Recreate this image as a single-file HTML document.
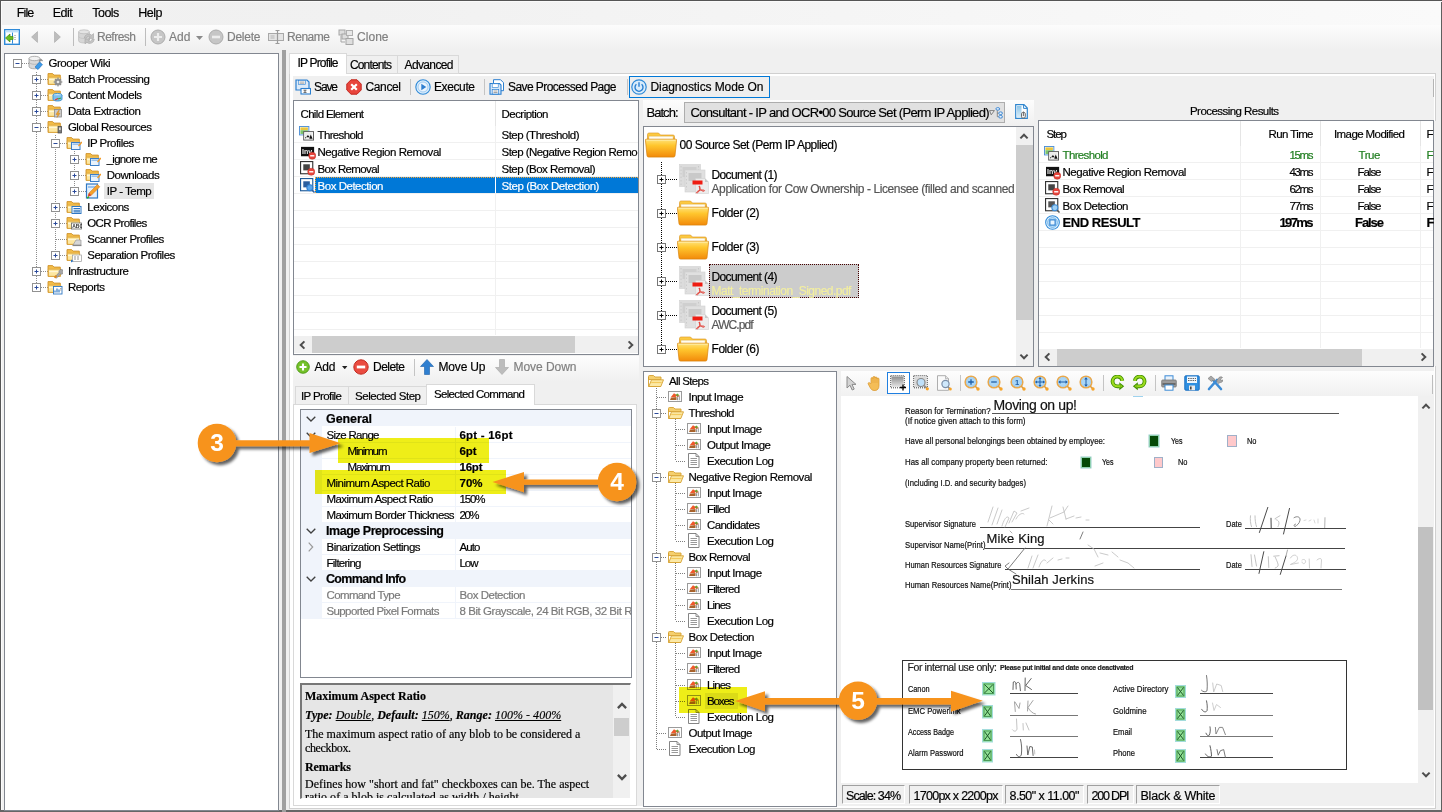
<!DOCTYPE html>
<html><head><meta charset="utf-8"><title>Grooper</title>
<style>
html,body{margin:0;padding:0;}
body{width:1442px;height:812px;overflow:hidden;background:#f0f0f0;position:relative;font-family:"Liberation Sans",sans-serif;font-size:11px;color:#000;}
.a{position:absolute;box-sizing:border-box;}
.t{position:absolute;white-space:nowrap;-webkit-text-stroke:.18px currentColor;}
svg{overflow:visible;}
</style></head><body>
<svg width="0" height="0" style="position:absolute"><defs><symbol id="fold" viewBox="0 0 16 16"><path d="M1 2.600h4.600l1.400 1.500h6.300v9.300H1z" fill="#f2bd49" stroke="#cf922b" stroke-width=".9"/><path d="M1.300 6.200h12.400l-.5 7.100H1.600z" fill="#fde7a0" stroke="#d9a238" stroke-width=".8"/><path d="M2 8.600h11" stroke="#fff7d9" stroke-width="1.100"/></symbol><symbol id="f_batch" viewBox="0 0 16 16"><path d="M1 2.600h4.600l1.400 1.500h6.300v9.300H1z" fill="#f2bd49" stroke="#cf922b" stroke-width=".9"/><path d="M1.300 6.200h12.400l-.5 7.100H1.600z" fill="#fde7a0" stroke="#d9a238" stroke-width=".8"/><path d="M2 8.600h11" stroke="#fff7d9" stroke-width="1.100"/><circle cx="11" cy="11" r="3.6" fill="#9a9a9a"/><circle cx="11" cy="11" r="1.4" fill="#e8e8e8"/><path d="M11 6.6v8.8M6.6 11h8.8M7.9 7.9l6.2 6.2M14.1 7.9l-6.2 6.2" stroke="#8a8a8a" stroke-width="1.1"/><circle cx="11" cy="11" r="1.3" fill="#e8e8e8"/></symbol><symbol id="f_content" viewBox="0 0 16 16"><path d="M1 2.600h4.600l1.400 1.500h6.300v9.300H1z" fill="#f2bd49" stroke="#cf922b" stroke-width=".9"/><path d="M1.300 6.200h12.400l-.5 7.100H1.600z" fill="#fde7a0" stroke="#d9a238" stroke-width=".8"/><path d="M2 8.600h11" stroke="#fff7d9" stroke-width="1.100"/><ellipse cx="10.5" cy="8.2" rx="4.5" ry="1.8" fill="#bfe3f7" stroke="#3a8fd0" stroke-width=".9"/><path d="M6 8.2v4c0 1 2 1.8 4.5 1.8s4.5-.8 4.5-1.8v-4" fill="#7cc0ee" stroke="#3a8fd0" stroke-width=".9"/><path d="M8 13l3-1.5" stroke="#d33" stroke-width="1.2"/><path d="M11 12l3-1" stroke="#3a3" stroke-width="1.2"/></symbol><symbol id="f_data" viewBox="0 0 16 16"><path d="M1 2.600h4.600l1.400 1.500h6.300v9.300H1z" fill="#f2bd49" stroke="#cf922b" stroke-width=".9"/><path d="M1.300 6.200h12.400l-.5 7.100H1.600z" fill="#fde7a0" stroke="#d9a238" stroke-width=".8"/><path d="M2 8.600h11" stroke="#fff7d9" stroke-width="1.100"/><rect x="7.5" y="6.5" width="7" height="7.5" fill="#c9c9c9" stroke="#8a8a8a" stroke-width=".8"/><path d="M11.5 7.5l-2.5 4h2l-1 3 3-4.2h-2l1.3-2.8z" fill="#f5a623" stroke="#c77c10" stroke-width=".4"/></symbol><symbol id="f_global" viewBox="0 0 16 16"><path d="M1 2.600h4.600l1.400 1.500h6.300v9.300H1z" fill="#f2bd49" stroke="#cf922b" stroke-width=".9"/><path d="M1.300 6.200h12.400l-.5 7.100H1.600z" fill="#fde7a0" stroke="#d9a238" stroke-width=".8"/><path d="M2 8.600h11" stroke="#fff7d9" stroke-width="1.100"/><rect x="11" y="7.5" width="3.6" height="6.5" fill="#7d7d7d" stroke="#444" stroke-width=".7"/><rect x="12" y="8.5" width="1.6" height="2.5" fill="#ddd"/></symbol><symbol id="f_ip" viewBox="0 0 16 16"><path d="M1 2.600h4.600l1.400 1.500h6.300v9.300H1z" fill="#f2bd49" stroke="#cf922b" stroke-width=".9"/><path d="M1.300 6.200h12.400l-.5 7.100H1.600z" fill="#fde7a0" stroke="#d9a238" stroke-width=".8"/><path d="M2 8.600h11" stroke="#fff7d9" stroke-width="1.100"/><rect x="5.5" y="7.5" width="8.5" height="7" fill="#e9f3fc" stroke="#3c7fc8" stroke-width="1"/><rect x="6.5" y="8.5" width="6.5" height="1.4" fill="#8fbbe8"/><path d="M15.5 6.5l-3.5 4 1 1 3.5-4z" fill="#f59a23"/></symbol><symbol id="f_lex" viewBox="0 0 16 16"><path d="M1 2.600h4.600l1.400 1.500h6.300v9.300H1z" fill="#f2bd49" stroke="#cf922b" stroke-width=".9"/><path d="M1.300 6.200h12.400l-.5 7.100H1.600z" fill="#fde7a0" stroke="#d9a238" stroke-width=".8"/><path d="M2 8.600h11" stroke="#fff7d9" stroke-width="1.100"/><rect x="6" y="7.5" width="9" height="7" fill="#fff" stroke="#2f78c4" stroke-width="1"/><path d="M7.5 9.5h6.5M7.5 11.2h6.5M7.5 12.9h6.5" stroke="#2f78c4" stroke-width="1.1"/></symbol><symbol id="f_ocr" viewBox="0 0 16 16"><path d="M1 2.600h4.600l1.400 1.500h6.300v9.300H1z" fill="#f2bd49" stroke="#cf922b" stroke-width=".9"/><path d="M1.300 6.200h12.400l-.5 7.100H1.600z" fill="#fde7a0" stroke="#d9a238" stroke-width=".8"/><path d="M2 8.600h11" stroke="#fff7d9" stroke-width="1.100"/><rect x="5.5" y="8" width="10" height="6" fill="#fff" stroke="#666" stroke-width=".8"/><text x="6.2" y="13" font-family="Liberation Sans" font-size="5" font-weight="700" fill="#333">ABC</text></symbol><symbol id="f_scan" viewBox="0 0 16 16"><path d="M1 2.600h4.600l1.400 1.500h6.300v9.300H1z" fill="#f2bd49" stroke="#cf922b" stroke-width=".9"/><path d="M1.300 6.200h12.400l-.5 7.100H1.600z" fill="#fde7a0" stroke="#d9a238" stroke-width=".8"/><path d="M2 8.600h11" stroke="#fff7d9" stroke-width="1.100"/><path d="M7 14l3-5h5v5z" fill="#d6d6d6" stroke="#999" stroke-width=".7"/><path d="M6.5 14.5h9" stroke="#888" stroke-width="1.2"/></symbol><symbol id="f_sep" viewBox="0 0 16 16"><path d="M1 2.600h4.600l1.400 1.500h6.300v9.300H1z" fill="#f2bd49" stroke="#cf922b" stroke-width=".9"/><path d="M1.300 6.200h12.400l-.5 7.100H1.600z" fill="#fde7a0" stroke="#d9a238" stroke-width=".8"/><path d="M2 8.600h11" stroke="#fff7d9" stroke-width="1.100"/><rect x="6.5" y="8" width="9" height="6.5" fill="#fff" stroke="#9a9a9a" stroke-width=".7"/><path d="M8 10h6M8 12h6" stroke="#888" stroke-width=".9" stroke-dasharray="2 1"/><path d="M5 12.5l2.5 1.5-2.5 1.5z" fill="#2f78c4"/></symbol><symbol id="f_infra" viewBox="0 0 16 16"><path d="M1 2.600h4.600l1.400 1.500h6.300v9.300H1z" fill="#f2bd49" stroke="#cf922b" stroke-width=".9"/><path d="M1.300 6.200h12.400l-.5 7.100H1.600z" fill="#fde7a0" stroke="#d9a238" stroke-width=".8"/><path d="M2 8.600h11" stroke="#fff7d9" stroke-width="1.100"/><path d="M8 14l4-4.5a2.4 2.4 0 1 1 1.6 1.6L9.6 15z" fill="#a7a7a7" stroke="#777" stroke-width=".6"/><path d="M7.5 14.8l2-2" stroke="#e08a1e" stroke-width="2"/></symbol><symbol id="f_rep" viewBox="0 0 16 16"><path d="M1 2.600h4.600l1.400 1.500h6.300v9.300H1z" fill="#f2bd49" stroke="#cf922b" stroke-width=".9"/><path d="M1.300 6.200h12.400l-.5 7.100H1.600z" fill="#fde7a0" stroke="#d9a238" stroke-width=".8"/><path d="M2 8.600h11" stroke="#fff7d9" stroke-width="1.100"/><rect x="6.5" y="7.5" width="8.5" height="7.5" fill="#fff" stroke="#2f78c4" stroke-width=".9"/><path d="M8 13.5v-2M10 13.5v-4M12 13.5v-3" stroke="#2f78c4" stroke-width="1.2"/><path d="M13 9.5h1.5M13 11h1.5" stroke="#888" stroke-width=".7"/></symbol><symbol id="iptemp" viewBox="0 0 16 16"><rect x="1.5" y="1" width="11" height="14" fill="#e6f0fb" stroke="#2f78c4" stroke-width="1.2"/><rect x="3" y="3" width="8" height="2" fill="#9cc3ec"/><path d="M3 13.5l1-3.5 8.5-8.5 2.3 2.3-8.5 8.5z" fill="#f5a02a" stroke="#c4761a" stroke-width=".5"/><path d="M3 13.5l1-3.5 2.3 2.3z" fill="#d33"/><path d="M2 15l2-1" stroke="#3a3" stroke-width="1.5"/></symbol><symbol id="db" viewBox="0 0 18 16"><path d="M2 3.5v8c0 1.3 2.5 2.3 5.5 2.3s5.5-1 5.5-2.3v-8" fill="#d9d9d9" stroke="#9a9a9a" stroke-width=".8"/><ellipse cx="7.5" cy="3.5" rx="5.5" ry="2.2" fill="#f2f2f2" stroke="#9a9a9a" stroke-width=".8"/><path d="M2 7c0 1.3 2.5 2.3 5.5 2.3s5.5-1 5.5-2.3" fill="none" stroke="#aaa" stroke-width=".7"/><path d="M8 12l4.5-5 3 2.6-4.5 5z" fill="#3d9be9" stroke="#1d6fc0" stroke-width=".6"/><path d="M12 6.5l2-2 1.5 1.5" stroke="#888" stroke-width="1.2" fill="none"/></symbol><symbol id="plus" viewBox="0 0 9 9"><rect x=".5" y=".5" width="8" height="8" fill="#fff" stroke="#919191"/><path d="M2.5 4.5h4M4.5 2.5v4" stroke="#2b4a9a" stroke-width="1"/></symbol><symbol id="minus" viewBox="0 0 9 9"><rect x=".5" y=".5" width="8" height="8" fill="#fff" stroke="#919191"/><path d="M2.5 4.5h4" stroke="#2b4a9a" stroke-width="1"/></symbol><symbol id="plusk" viewBox="0 0 9 9"><rect x=".5" y=".5" width="8" height="8" fill="#fff" stroke="#777"/><path d="M2.5 4.5h4M4.5 2.5v4" stroke="#000" stroke-width="1"/></symbol><symbol id="nav" viewBox="0 0 16 16"><rect x=".7" y=".7" width="14.6" height="14.6" fill="#fff" stroke="#2f8ad8" stroke-width="1.4"/><rect x="1.4" y="1.4" width="13.2" height="2" fill="#bfe0fa"/><path d="M8.5 3.6v11" stroke="#2f8ad8" stroke-width="1"/><path d="M11 6v6" stroke="#888" stroke-width="1" stroke-dasharray="1 1"/><path d="M1.5 9l4.5-4v2.5h3v3h-3v2.5z" fill="#6bbf1f" stroke="#3f8a10" stroke-width=".7"/></symbol><symbol id="tril" viewBox="0 0 7 12"><path d="M6.500 .6v10.800L.6 6z" fill="#bdbdbd" stroke="#a8a8a8" stroke-width=".6"/></symbol><symbol id="trir" viewBox="0 0 7 12"><path d="M.5 .6v10.800L6.400 6z" fill="#bdbdbd" stroke="#a8a8a8" stroke-width=".6"/></symbol><symbol id="refresh" viewBox="0 0 17 16"><path d="M.6 2.800v9c0 1.300 2.400 2.200 5.400 2.200s5.400-.9 5.400-2.200v-9" fill="#d6d6d6" stroke="#b9b9b9" stroke-width=".7"/><ellipse cx="6" cy="2.800" rx="5.400" ry="2" fill="#e4e4e4" stroke="#b9b9b9" stroke-width=".7"/><path d="M.6 7.300c0 1.300 2.400 2.200 5.400 2.200" fill="none" stroke="#bdbdbd" stroke-width=".6"/><path d="M6.200 9.200a4.600 4.600 0 0 1 7.600-3l1.700-1.600v4.800h-4.800l1.700-1.700a2.400 2.400 0 0 0-3.900 1.500z" fill="#c4c4c4" stroke="#a6a6a6" stroke-width=".6"/><path d="M16.300 10.300a4.600 4.600 0 0 1-7.600 3l-1.700 1.600v-4.800h4.800l-1.700 1.700a2.400 2.400 0 0 0 3.900-1.500z" fill="#c4c4c4" stroke="#a6a6a6" stroke-width=".6"/></symbol><symbol id="addg" viewBox="0 0 16 16"><circle cx="8" cy="8" r="7" fill="#c6c6c6" stroke="#adadad" stroke-width="1"/><path d="M8 4v8M4 8h8" stroke="#ededed" stroke-width="2.2"/></symbol><symbol id="delg" viewBox="0 0 16 16"><circle cx="8" cy="8" r="7" fill="#c6c6c6" stroke="#adadad" stroke-width="1"/><path d="M4 8h8" stroke="#ededed" stroke-width="2.6"/></symbol><symbol id="rename" viewBox="0 0 16 16"><rect x=".5" y="4.5" width="15" height="7" fill="#e4e4e4" stroke="#a8a8a8"/><path d="M2.500 7h4M2.500 9h4" stroke="#b5b5b5" stroke-width="1"/><path d="M9.500 1.500v13M7.500 1.500h4M7.500 14.500h4" stroke="#9a9a9a" stroke-width="1.200"/></symbol><symbol id="clone" viewBox="0 0 16 16"><rect x="1" y="1" width="6" height="5" fill="#dedede" stroke="#a5a5a5"/><rect x="4" y="5" width="6" height="5" fill="#dedede" stroke="#a5a5a5"/><rect x="8" y="9.500" width="7" height="6" fill="#dedede" stroke="#a5a5a5"/><rect x="8.500" y="1.500" width="6" height="5" fill="#e8e8e8" stroke="#b0b0b0"/><path d="M3 7v6h4" stroke="#a5a5a5" fill="none"/></symbol><symbol id="dd" viewBox="0 0 7 4"><path d="M0 0h7l-3.500 4z" fill="#8a8a8a"/></symbol><symbol id="ddk" viewBox="0 0 7 4"><path d="M0 0h7l-3.500 4z" fill="#222"/></symbol><symbol id="save" viewBox="0 0 16 16"><path d="M1 1h11l2 2v8H1z" fill="#ddebf9" stroke="#2a7fd0" stroke-width="1.200"/><rect x="3.500" y="1.500" width="7" height="4" fill="#fff" stroke="#2a7fd0" stroke-width=".6"/><path d="M4.500 3h5M4.500 4.300h5" stroke="#777" stroke-width=".6"/><rect x="6" y="9.500" width="9.500" height="5.500" fill="#fff" stroke="#2a7fd0" stroke-width="1.100"/><path d="M8.500 11.200h3M10 11.200v2.200M8.500 13.400h3" stroke="#444" stroke-width=".8"/></symbol><symbol id="cancel" viewBox="0 0 16 16"><path d="M5 .8h6L15.200 5v6L11 15.200H5L.8 11V5z" fill="#e8453c" stroke="#c2271f" stroke-width="1"/><path d="M5.200 5.200l5.600 5.600M10.800 5.200l-5.600 5.600" stroke="#fff" stroke-width="2.200"/></symbol><symbol id="exec" viewBox="0 0 16 16"><circle cx="8" cy="8" r="7.200" fill="#d9ecfb" stroke="#2f8ad8" stroke-width="1.100"/><circle cx="8" cy="8" r="5" fill="#eaf4fd" stroke="#8fc2ee" stroke-width=".8"/><path d="M6.300 4.800v6.400L11.300 8z" fill="#2f7fd0"/></symbol><symbol id="savepage" viewBox="0 0 16 16"><path d="M4.500 .7h7l3 3v8h-10z" fill="#fff" stroke="#2a7fd0" stroke-width="1"/><path d="M1 4.500h9.500l1.500 1.500v9.300H1z" fill="#d5e8fa" stroke="#2a7fd0" stroke-width="1.100"/><rect x="3.200" y="4.800" width="6" height="3.500" fill="#fff" stroke="#2a7fd0" stroke-width=".6"/><rect x="3.200" y="10.500" width="6.500" height="4.500" fill="#fff" stroke="#2a7fd0" stroke-width=".7"/><path d="M4.500 12h4M4.500 13.500h4" stroke="#666" stroke-width=".6"/></symbol><symbol id="diag" viewBox="0 0 16 16"><circle cx="8" cy="8" r="7.200" fill="#d9ecfb" stroke="#2f8ad8" stroke-width="1.200"/><path d="M5.400 5.300a4 4 0 1 0 5.200 0" fill="none" stroke="#2a7fd0" stroke-width="1.400"/><path d="M8 3.300v4.500" stroke="#2a7fd0" stroke-width="1.400"/></symbol><symbol id="s_thr" viewBox="0 0 16 16"><rect x=".5" y=".5" width="10" height="9" fill="#fff" stroke="#4d8fd6" stroke-width="1"/><rect x="1.500" y="1.500" width="8" height="3" fill="#e9c63f"/><rect x="1.500" y="4.500" width="8" height="4" fill="#7cc46a"/><rect x="5" y="6" width="10.500" height="9" fill="#fff" stroke="#555" stroke-width="1"/><rect x="6.200" y="7.200" width="8" height="6.500" fill="#ececec"/><path d="M6.500 13.500l3-4 2 2.500h-5zM11 13.500l1.500-4.500 2 4.500z" fill="#111"/></symbol><symbol id="s_neg" viewBox="0 0 16 16"><rect x="0" y="2" width="14" height="10" fill="#111"/><text x="1" y="10" font-family="Liberation Sans" font-size="7.500" font-weight="700" fill="#eee">Inv</text><circle cx="12" cy="11.500" r="3.800" fill="#e8453c" stroke="#b92a22" stroke-width=".5"/><path d="M9.800 11.500h4.400" stroke="#fff" stroke-width="1.500"/></symbol><symbol id="s_brem" viewBox="0 0 16 16"><rect x=".6" y=".6" width="13" height="13" fill="#fff" stroke="#333" stroke-width="1.200"/><rect x="3.500" y="3.500" width="7" height="6.500" fill="#444"/><circle cx="12" cy="11.500" r="3.800" fill="#e8453c" stroke="#b92a22" stroke-width=".5"/><path d="M9.800 11.500h4.400" stroke="#fff" stroke-width="1.500"/></symbol><symbol id="s_bdet" viewBox="0 0 16 16"><rect x=".6" y=".6" width="13" height="13" fill="#fff" stroke="#333" stroke-width="1.200"/><rect x="3.500" y="3.500" width="7" height="6.500" fill="#555"/><circle cx="10.500" cy="10.500" r="3.200" fill="#9fd0f5" stroke="#3d8cd6" stroke-width="1.100"/><path d="M13 13l2.500 2.500" stroke="#555" stroke-width="1.600"/></symbol><symbol id="s_bdet_sel" viewBox="0 0 16 16"><rect x=".6" y=".6" width="13" height="13" fill="#fff" stroke="#1d5a99" stroke-width="1.200"/><rect x="3.500" y="3.500" width="7" height="6.500" fill="#2b5e9e"/><circle cx="10.500" cy="10.500" r="3.200" fill="#5aa5ec" stroke="#2f7fd0" stroke-width="1.100"/><path d="M13 13l2.500 2.500" stroke="#2f5f9f" stroke-width="1.600"/></symbol><symbol id="s_end" viewBox="0 0 16 16"><circle cx="8" cy="8" r="7.300" fill="#dff0fd" stroke="#2f8ad8" stroke-width="1.100"/><circle cx="8" cy="8" r="5.200" fill="#bfe0f9" stroke="#57a5e6" stroke-width=".8"/><rect x="5.200" y="5.200" width="5.600" height="5.600" fill="#e9f5fe" stroke="#2a7fd0" stroke-width="1.200"/></symbol><symbol id="addc" viewBox="0 0 16 16"><circle cx="8" cy="8" r="7.200" fill="#74c12a" stroke="#4a9612" stroke-width="1"/><path d="M8 4v8M4 8h8" stroke="#fff" stroke-width="2.400"/></symbol><symbol id="delc" viewBox="0 0 16 16"><circle cx="8" cy="8" r="7.200" fill="#ea4b40" stroke="#c22c22" stroke-width="1"/><path d="M3.800 8h8.400" stroke="#fff" stroke-width="2.800"/></symbol><symbol id="mvup" viewBox="0 0 14 16"><path d="M7 .5l6.500 7h-4v8h-5v-8h-4z" fill="#2f7fd0" stroke="#1d5fa8" stroke-width=".6"/></symbol><symbol id="mvdn" viewBox="0 0 14 16"><path d="M7 15.500l6.500-7h-4v-8h-5v8h-4z" fill="#bcbcbc" stroke="#a5a5a5" stroke-width=".6"/></symbol><symbol id="bigfold" viewBox="0 0 32 27"><defs><linearGradient id="gf1" x1="0" y1="0" x2="0" y2="1"><stop offset="0" stop-color="#ffe27a"/><stop offset=".35" stop-color="#ffc62e"/><stop offset="1" stop-color="#f28a0a"/></linearGradient><linearGradient id="gf2" x1="0" y1="0" x2="0" y2="1"><stop offset="0" stop-color="#ffd24a"/><stop offset="1" stop-color="#e69a1a"/></linearGradient></defs><path d="M2.500 3.500a1.500 1.500 0 0 1 1.500-1.500h9.500l2 2h12.500a1.500 1.500 0 0 1 1.500 1.500v6h-27z" fill="url(#gf2)" stroke="#d98f17" stroke-width=".6"/><rect x="4" y="5.200" width="24" height="3.500" fill="#fffdf2" stroke="#e2c37a" stroke-width=".4"/><path d="M1.200 8.200h29.600a.8 .8 0 0 1 .8 .9l-1.600 15.600a1.600 1.600 0 0 1-1.600 1.400H3.600a1.600 1.600 0 0 1-1.600-1.400L.4 9.100a.8 .8 0 0 1 .8-.9z" fill="url(#gf1)" stroke="#d9820b" stroke-width=".7"/><path d="M1.500 9.200h29" stroke="#fff3b8" stroke-width=".9" opacity=".9"/></symbol><symbol id="docpdf" viewBox="0 0 30 30"><rect x=".5" y=".5" width="21" height="22" fill="#dcdcdc" stroke="#d0d0d0" stroke-width=".6"/><rect x="3.500" y="3" width="14" height="10" fill="#cfcfcf"/><path d="M2 2v19M19.500 2v19" stroke="#c4c4c4" stroke-width=".8" stroke-dasharray="1.500 2"/><rect x="6" y="6" width="20" height="22" fill="#e0e0e0" stroke="#cfcfcf" stroke-width=".6"/><rect x="9.500" y="9" width="13" height="8" fill="#c9c9c9"/><path d="M7.500 8v18" stroke="#c6c6c6" stroke-width=".8" stroke-dasharray="1.500 2"/><path d="M16.500 14.500h9.500l3.500 3.500v11.500h-13z" fill="#ececec" stroke="#d2d2d2" stroke-width=".6"/><path d="M26 14.500v3.500h3.500z" fill="#c9c9c9"/><rect x="13.500" y="16.500" width="10" height="4" fill="#ee1c12"/><path d="M20 22c1.500 0 1.200 2.500 0 5 -1 2-2.500 2.500-2.500 1.500s3-2.500 6.500-2.500c1.500 0 2 .8 1 1.200-1.500 .5-4.500-2-5-5.200z" fill="none" stroke="#e0352b" stroke-width=".9"/></symbol><symbol id="ofold" viewBox="0 0 16 12"><path d="M.5 1.500a1 1 0 0 1 1-1h4l1.500 1.500h6v2.500h-12.500z" fill="#f5cf6d" stroke="#d6a232" stroke-width=".9"/><path d="M.5 2v9.500h12.500" fill="none" stroke="#d6a232" stroke-width=".9"/><path d="M.8 11.500l2.700-6.700h12l-2.700 6.700z" fill="#fce9a6" stroke="#d6a232" stroke-width=".9"/><path d="M3.200 7.500h10.500" stroke="#f3c95c" stroke-width="1.200"/></symbol><symbol id="img" viewBox="0 0 14 11"><rect x=".5" y=".5" width="13" height="10" fill="#fdfdfd" stroke="#9b9b9b" stroke-width="1"/><path d="M2.500 6.500l3.500-4.300 3.500 2.200 -2 1.500z" fill="#f0572a"/><path d="M7.500 4l2-1.500 1.500 1.500 -1 2z" fill="#6aa331"/><path d="M2 9l1-2.200 5.500-.8v3z" fill="#a8632c"/><path d="M9.500 9.200v-3M11.300 9.200v-4" stroke="#8a8a8a" stroke-width=".9"/><path d="M9 5.500l2.500-.8" stroke="#d24b2a" stroke-width=".8"/></symbol><symbol id="log" viewBox="0 0 12 15"><path d="M.5 .5h7.500l3 3v11h-10.500z" fill="#fff" stroke="#777" stroke-width=".9"/><path d="M8 .5v3h3" fill="none" stroke="#777" stroke-width=".8"/><path d="M2.500 5.500h6.500M2.500 7.500h6.500M2.500 9.500h6.500M2.500 11.500h6.500" stroke="#8d8d8d" stroke-width=".9"/></symbol><symbol id="v_ptr" viewBox="0 0 16 16"><path d="M3 1.500v11.500l3-2.800 2.200 4.800 2-.9-2.200-4.700h4z" fill="#d4d4d4" stroke="#8c8c8c" stroke-width="1"/></symbol><symbol id="v_hand" viewBox="0 0 16 16"><path d="M4 8.500V3.600a1 1 0 0 1 2 0V2.400a1 1 0 0 1 2 0V3a1 1 0 0 1 2 0v1a1 1 0 0 1 2 0v6.500c0 3-1.500 5-4 5H7c-2 0-3.200-1.500-4.200-3.500L1.200 9c-.5-1.200 1-2 1.800-.8z" fill="#f4bd57" stroke="#d9952a" stroke-width=".7"/><path d="M6 3.500v4.500M8 2.500v5.500M10 3.500v4.500" stroke="#e3a23a" stroke-width=".6"/></symbol><symbol id="v_sel" viewBox="0 0 16 16"><defs><linearGradient id="gsel" x1="0" y1="0" x2="0" y2="1"><stop offset="0" stop-color="#8e8e8e"/><stop offset="1" stop-color="#e6e6e6"/></linearGradient></defs><rect x="1.500" y="1.500" width="12" height="10.500" fill="url(#gsel)"/><rect x=".7" y=".7" width="13.600" height="12.100" fill="none" stroke="#444" stroke-width="1" stroke-dasharray="1 1"/><path d="M13 9.500v6M10 12.500h6" stroke="#000" stroke-width="1.300"/></symbol><symbol id="v_zreg" viewBox="0 0 16 16"><rect x="1.500" y="1.500" width="12" height="10.500" fill="#dadada"/><rect x=".7" y=".7" width="13.600" height="12.100" fill="none" stroke="#444" stroke-width="1" stroke-dasharray="1 1"/><circle cx="8" cy="7.500" r="4" fill="#bfe0fa" stroke="#8a8a8a" stroke-width="1.200"/><path d="M11 10.500l3 3" stroke="#8a8a8a" stroke-width="1.500"/><circle cx="14.300" cy="13.800" r="1.600" fill="#f7a428"/></symbol><symbol id="v_zpage" viewBox="0 0 16 16"><path d="M1.500 .7h8l3 3v11.600h-11z" fill="#fafafa" stroke="#a5a5a5" stroke-width=".9"/><path d="M9.500 .7v3h3" fill="#e4e4e4" stroke="#a5a5a5" stroke-width=".7"/><circle cx="9.500" cy="9" r="3.600" fill="#cfe8fb" stroke="#7b8fa8" stroke-width="1.200"/><path d="M12 11.800l2 2" stroke="#8a8a8a" stroke-width="1.500"/><circle cx="14.300" cy="14" r="1.500" fill="#f7a428"/></symbol><symbol id="v_zin" viewBox="0 0 16 16"><circle cx="7" cy="7" r="5.800" fill="#cfe9fc" stroke="#e8a84c" stroke-width="1.600"/><circle cx="7" cy="7" r="4.600" fill="#a9d6f7" stroke="#8cbfe8" stroke-width=".5"/><path d="M7 4.200v5.600M4.200 7h5.600" stroke="#1f5fa8" stroke-width="1.300"/><path d="M11.300 11.300l2.200 2.200" stroke="#d99a3e" stroke-width="1.600"/><circle cx="14" cy="14" r="1.700" fill="#f7a428"/></symbol><symbol id="v_zout" viewBox="0 0 16 16"><circle cx="7" cy="7" r="5.800" fill="#cfe9fc" stroke="#e8a84c" stroke-width="1.600"/><circle cx="7" cy="7" r="4.600" fill="#a9d6f7" stroke="#8cbfe8" stroke-width=".5"/><path d="M4.200 7h5.600" stroke="#1f5fa8" stroke-width="1.300"/><path d="M11.300 11.300l2.200 2.200" stroke="#d99a3e" stroke-width="1.600"/><circle cx="14" cy="14" r="1.700" fill="#f7a428"/></symbol><symbol id="v_z1" viewBox="0 0 16 16"><circle cx="7" cy="7" r="5.800" fill="#cfe9fc" stroke="#e8a84c" stroke-width="1.600"/><circle cx="7" cy="7" r="4.600" fill="#a9d6f7" stroke="#8cbfe8" stroke-width=".5"/><text x="5" y="9.800" font-family="Liberation Sans" font-size="7.500" font-weight="700" fill="#1f5fa8">1</text><path d="M11.300 11.300l2.200 2.200" stroke="#d99a3e" stroke-width="1.600"/><circle cx="14" cy="14" r="1.700" fill="#f7a428"/></symbol><symbol id="v_zfit" viewBox="0 0 16 16"><circle cx="7" cy="7" r="5.800" fill="#cfe9fc" stroke="#e8a84c" stroke-width="1.600"/><circle cx="7" cy="7" r="4.600" fill="#a9d6f7" stroke="#8cbfe8" stroke-width=".5"/><path d="M7 2.800v8.400M2.800 7h8.400" stroke="#1f5fa8" stroke-width="1"/><path d="M7 2l1.500 2h-3zM7 12l1.500-2h-3zM2 7l2-1.500v3zM12 7l-2-1.500v3z" fill="#1f5fa8"/><path d="M11.300 11.300l2.200 2.200" stroke="#d99a3e" stroke-width="1.600"/><circle cx="14" cy="14" r="1.700" fill="#f7a428"/></symbol><symbol id="v_zw" viewBox="0 0 16 16"><circle cx="7" cy="7" r="5.800" fill="#cfe9fc" stroke="#e8a84c" stroke-width="1.600"/><circle cx="7" cy="7" r="4.600" fill="#a9d6f7" stroke="#8cbfe8" stroke-width=".5"/><path d="M3 7h8" stroke="#1f5fa8" stroke-width="1"/><path d="M2.300 7l2.200-1.800v3.600zM11.700 7l-2.200-1.800v3.600z" fill="#1f5fa8"/><path d="M11.300 11.300l2.200 2.200" stroke="#d99a3e" stroke-width="1.600"/><circle cx="14" cy="14" r="1.700" fill="#f7a428"/></symbol><symbol id="v_zh" viewBox="0 0 16 16"><circle cx="7" cy="7" r="5.800" fill="#cfe9fc" stroke="#e8a84c" stroke-width="1.600"/><circle cx="7" cy="7" r="4.600" fill="#a9d6f7" stroke="#8cbfe8" stroke-width=".5"/><path d="M7 3v8" stroke="#1f5fa8" stroke-width="1"/><path d="M7 2.300l1.800 2.200h-3.600zM7 11.700l1.800-2.200h-3.600z" fill="#1f5fa8"/><path d="M11.300 11.300l2.200 2.200" stroke="#d99a3e" stroke-width="1.600"/><circle cx="14" cy="14" r="1.700" fill="#f7a428"/></symbol><symbol id="v_rcw" viewBox="0 0 16 16"><path d="M13.300 5.700A4.900 4.900 0 1 0 8.500 11.300H10.500" fill="none" stroke="#3f8f00" stroke-width="3.800"/><path d="M10.300 7.200L15.200 11.200L10.300 15.200z" fill="#3f8f00"/><path d="M13.300 5.900A4.900 4.900 0 1 0 8.500 11.300H11" fill="none" stroke="#9edc1e" stroke-width="2.100"/><path d="M11.300 9.300L13.600 11.200L11.300 13.100z" fill="#8fd018"/></symbol><symbol id="v_rccw" viewBox="0 0 16 16"><path d="M3.800 5.700A4.900 4.900 0 1 1 8.600 11.300H6.600" fill="none" stroke="#3f8f00" stroke-width="3.800"/><path d="M6.800 7.200L1.900 11.200L6.800 15.200z" fill="#3f8f00"/><path d="M3.800 5.900A4.900 4.900 0 1 1 8.600 11.300H6.100" fill="none" stroke="#9edc1e" stroke-width="2.100"/><path d="M5.800 9.300L3.500 11.200L5.800 13.100z" fill="#8fd018"/></symbol><symbol id="v_print" viewBox="0 0 16 16"><rect x="4" y=".8" width="8" height="5" fill="#eaf3fc" stroke="#3d8cd6" stroke-width="1"/><rect x=".7" y="5" width="14.600" height="7" rx="1" fill="#9b9b9b" stroke="#777" stroke-width=".8"/><rect x="1.500" y="8" width="13" height="2" fill="#6a6a6a"/><rect x="4" y="10" width="8" height="5.200" fill="#fff" stroke="#3d8cd6" stroke-width="1"/></symbol><symbol id="v_save" viewBox="0 0 16 16"><rect x=".8" y=".8" width="14.400" height="14.400" rx="1" fill="#2f8fe0" stroke="#1a6fc2" stroke-width="1"/><rect x="3" y="1.500" width="10" height="6.500" fill="#eef6fd"/><path d="M4 3.500h8M4 5.500h8" stroke="#555" stroke-width=".9" stroke-dasharray="1.500 .8"/><rect x="5" y="10.500" width="6" height="4.700" fill="#e9e9e9"/><rect x="6" y="11.500" width="1.600" height="3" fill="#444"/></symbol><symbol id="v_tools" viewBox="0 0 16 16"><path d="M2 14l8-9" stroke="#3d8cd6" stroke-width="2.600" stroke-linecap="round"/><path d="M14 14L6 5" stroke="#3d8cd6" stroke-width="2.600" stroke-linecap="round"/><path d="M9.500 6l2.500-3.500c1.500-1 3-.8 3.500 0l-2 1.500 .5 1.500 2-.5c0 1.500-1.500 2.800-3 2.500l-1.500 1z" fill="#a8a8a8" stroke="#7a7a7a" stroke-width=".6"/><path d="M1 3.500l3-2.500 4 3.500-1 1.500-1.200-.8-1.300 1.300z" fill="#a8a8a8" stroke="#7a7a7a" stroke-width=".6"/></symbol><symbol id="c_tree" viewBox="0 0 14 12"><path d="M.6 3.600L5.400 3.600L2.200 7.800z" fill="#ececec" stroke="#666" stroke-width=".8"/><path d="M8.300 3.200V9.700H9.600M8.300 6.200H9.600" fill="none" stroke="#777" stroke-width=".8"/><ellipse cx="8.800" cy="1.900" rx="1.900" ry="1.300" fill="#eaf4fd" stroke="#2f7fd0" stroke-width=".9"/><ellipse cx="11.600" cy="6.200" rx="1.900" ry="1.300" fill="#eaf4fd" stroke="#2f7fd0" stroke-width=".9"/><ellipse cx="11.600" cy="9.800" rx="1.900" ry="1.300" fill="#eaf4fd" stroke="#2f7fd0" stroke-width=".9"/></symbol><symbol id="c_doc" viewBox="0 0 13 15"><defs><linearGradient id="gcd" x1="0" y1="0" x2="0" y2="1"><stop offset="0" stop-color="#8fc6e8"/><stop offset="1" stop-color="#d7ecf8"/></linearGradient></defs><path d="M.7 .7h8.300l3.300 3.300v10.300H.7z" fill="#fff" stroke="#2f86cf" stroke-width="1.200"/><rect x="2" y="2" width="4.500" height="11" fill="url(#gcd)"/><path d="M8.600 1v3.400h3.400" fill="none" stroke="#2f86cf" stroke-width="1"/><rect x="6.500" y="8.500" width="3.800" height="5.500" rx="1.200" fill="#f4f4f4" stroke="#6b6b6b" stroke-width="1"/><path d="M8.400 12V7.500" stroke="#6b6b6b" stroke-width="1"/></symbol><symbol id="chd" viewBox="0 0 10 6"><path d="M.7 .7l4.300 4.300 4.300-4.300" fill="none" stroke="#404040" stroke-width="1.300"/></symbol><symbol id="chr" viewBox="0 0 6 10"><path d="M.7 .7l4 4.300-4 4.300" fill="none" stroke="#9a9a9a" stroke-width="1.200"/></symbol><symbol id="sa_l" viewBox="0 0 7 10"><path d="M5.400 1.400L1.700 5l3.700 3.600" fill="none" stroke="#4d4d4d" stroke-width="2"/></symbol><symbol id="sa_r" viewBox="0 0 7 10"><path d="M1.600 1.400L5.300 5 1.600 8.600" fill="none" stroke="#4d4d4d" stroke-width="2"/></symbol><symbol id="sa_u" viewBox="0 0 10 7"><path d="M1.400 5.400L5 1.700l3.600 3.700" fill="none" stroke="#4d4d4d" stroke-width="2"/></symbol><symbol id="sa_d" viewBox="0 0 10 7"><path d="M1.400 1.600L5 5.300l3.600-3.700" fill="none" stroke="#4d4d4d" stroke-width="2"/></symbol></defs></svg>
<div class="a" style="left:0;top:1px;width:1442px;height:24px;background:linear-gradient(to right,#f0f0f0 0,#f1f1f1 25%,#fafafa 100%)"></div>
<div class="a" style="left:0;top:25px;width:1442px;height:25px;background:linear-gradient(#fcfcfc,#f0f0f0)"></div>
<div class="a " style="left:1441px;top:0px;width:1px;height:812px;background:#5f5f5f;"></div>
<div class="a " style="left:0px;top:0px;width:1442px;height:1px;background:#555;"></div>
<div class="a " style="left:1px;top:1px;width:1441px;height:1px;background:#fafafa;"></div>
<div class="a " style="left:0px;top:0px;width:1px;height:812px;background:#555;"></div>
<div class="a " style="left:1px;top:1px;width:1px;height:810px;background:#fafafa;"></div>
<div class="a " style="left:0px;top:810px;width:1442px;height:2px;background:#666;"></div>
<span class="t" style="left:16.8px;top:4.8px;font-size:12.5px;line-height:16px;letter-spacing:-0.88px;">File</span>
<span class="t" style="left:52.8px;top:4.8px;font-size:12.5px;line-height:16px;letter-spacing:-0.51px;">Edit</span>
<span class="t" style="left:92.3px;top:4.8px;font-size:12.5px;line-height:16px;letter-spacing:-0.54px;">Tools</span>
<span class="t" style="left:138.3px;top:4.8px;font-size:12.5px;line-height:16px;letter-spacing:-0.50px;">Help</span>
<svg class="a" style="left:4px;top:29px;" width="16" height="16"><use href="#nav"/></svg>
<svg class="a" style="left:31px;top:31px;" width="7" height="12"><use href="#tril"/></svg>
<svg class="a" style="left:54px;top:31px;" width="7" height="12"><use href="#trir"/></svg>
<div class="a " style="left:73px;top:28px;width:1px;height:18px;background:#bdbdbd;"></div>
<svg class="a" style="left:78px;top:28.5px;" width="17" height="16"><use href="#refresh"/></svg>
<span class="t" style="left:97.0px;top:29.0px;font-size:12px;line-height:16px;letter-spacing:-0.50px;color:#808080;">Refresh</span>
<div class="a " style="left:145px;top:28px;width:1px;height:18px;background:#bdbdbd;"></div>
<svg class="a" style="left:150px;top:29px;" width="16" height="16"><use href="#addg"/></svg>
<span class="t" style="left:169.0px;top:29.0px;font-size:12px;line-height:16px;letter-spacing:0.07px;color:#808080;">Add</span>
<svg class="a" style="left:196px;top:36px;" width="7" height="4"><use href="#dd"/></svg>
<svg class="a" style="left:208px;top:29px;" width="16" height="16"><use href="#delg"/></svg>
<span class="t" style="left:227.0px;top:29.0px;font-size:12px;line-height:16px;letter-spacing:-0.24px;color:#808080;">Delete</span>
<svg class="a" style="left:268px;top:29px;" width="16" height="16"><use href="#rename"/></svg>
<span class="t" style="left:287.0px;top:29.0px;font-size:12px;line-height:16px;letter-spacing:-0.47px;color:#808080;">Rename</span>
<svg class="a" style="left:338px;top:29px;" width="16" height="16"><use href="#clone"/></svg>
<span class="t" style="left:357.0px;top:29.0px;font-size:12px;line-height:16px;letter-spacing:0.04px;color:#808080;">Clone</span>
<div class="a " style="left:4px;top:53px;width:275px;height:758px;background:#fff;border:1px solid #828790;"></div>
<div class="a " style="left:282px;top:50px;width:4px;height:762px;background:#a0a0a0;"></div>
<div class="a" style="left:36px;top:72px;width:1px;height:215px;background:repeating-linear-gradient(to bottom,#8c8c8c 0 1px,transparent 1px 2px)"></div>
<div class="a" style="left:55px;top:135px;width:1px;height:120px;background:repeating-linear-gradient(to bottom,#8c8c8c 0 1px,transparent 1px 2px)"></div>
<div class="a" style="left:74px;top:151px;width:1px;height:40px;background:repeating-linear-gradient(to bottom,#8c8c8c 0 1px,transparent 1px 2px)"></div>
<div class="a" style="left:22px;top:63px;width:7px;height:1px;background:repeating-linear-gradient(to right,#8c8c8c 0 1px,transparent 1px 2px)"></div>
<svg class="a" style="left:13px;top:59px;" width="9" height="9"><use href="#minus"/></svg>
<svg class="a" style="left:27px;top:55px;" width="18" height="16"><use href="#db"/></svg>
<span class="t" style="left:48.5px;top:55.0px;font-size:11.5px;line-height:16px;letter-spacing:-0.46px;">Grooper Wiki</span>
<div class="a" style="left:41px;top:79px;width:7px;height:1px;background:repeating-linear-gradient(to right,#8c8c8c 0 1px,transparent 1px 2px)"></div>
<svg class="a" style="left:32px;top:75px;" width="9" height="9"><use href="#plus"/></svg>
<svg class="a" style="left:47px;top:71px;" width="16" height="16"><use href="#f_batch"/></svg>
<span class="t" style="left:67.9px;top:71.0px;font-size:11.5px;line-height:16px;letter-spacing:-0.50px;">Batch Processing</span>
<div class="a" style="left:41px;top:95px;width:7px;height:1px;background:repeating-linear-gradient(to right,#8c8c8c 0 1px,transparent 1px 2px)"></div>
<svg class="a" style="left:32px;top:91px;" width="9" height="9"><use href="#plus"/></svg>
<svg class="a" style="left:47px;top:87px;" width="16" height="16"><use href="#f_content"/></svg>
<span class="t" style="left:67.9px;top:87.0px;font-size:11.5px;line-height:16px;letter-spacing:-0.50px;">Content Models</span>
<div class="a" style="left:41px;top:111px;width:7px;height:1px;background:repeating-linear-gradient(to right,#8c8c8c 0 1px,transparent 1px 2px)"></div>
<svg class="a" style="left:32px;top:107px;" width="9" height="9"><use href="#plus"/></svg>
<svg class="a" style="left:47px;top:103px;" width="16" height="16"><use href="#f_data"/></svg>
<span class="t" style="left:67.9px;top:103.0px;font-size:11.5px;line-height:16px;letter-spacing:-0.40px;">Data Extraction</span>
<div class="a" style="left:41px;top:127px;width:7px;height:1px;background:repeating-linear-gradient(to right,#8c8c8c 0 1px,transparent 1px 2px)"></div>
<svg class="a" style="left:32px;top:123px;" width="9" height="9"><use href="#minus"/></svg>
<svg class="a" style="left:47px;top:119px;" width="16" height="16"><use href="#f_global"/></svg>
<span class="t" style="left:67.9px;top:119.0px;font-size:11.5px;line-height:16px;letter-spacing:-0.49px;">Global Resources</span>
<div class="a" style="left:60px;top:143px;width:7px;height:1px;background:repeating-linear-gradient(to right,#8c8c8c 0 1px,transparent 1px 2px)"></div>
<svg class="a" style="left:51px;top:139px;" width="9" height="9"><use href="#minus"/></svg>
<svg class="a" style="left:66px;top:135px;" width="16" height="16"><use href="#f_ip"/></svg>
<span class="t" style="left:87.3px;top:135.0px;font-size:11.5px;line-height:16px;letter-spacing:-0.52px;">IP Profiles</span>
<div class="a" style="left:79px;top:159px;width:7px;height:1px;background:repeating-linear-gradient(to right,#8c8c8c 0 1px,transparent 1px 2px)"></div>
<svg class="a" style="left:70px;top:155px;" width="9" height="9"><use href="#plus"/></svg>
<svg class="a" style="left:85px;top:151px;" width="16" height="16"><use href="#f_ip"/></svg>
<span class="t" style="left:106.7px;top:151.0px;font-size:11.5px;line-height:16px;letter-spacing:-0.73px;">_ignore me</span>
<div class="a" style="left:79px;top:175px;width:7px;height:1px;background:repeating-linear-gradient(to right,#8c8c8c 0 1px,transparent 1px 2px)"></div>
<svg class="a" style="left:70px;top:171px;" width="9" height="9"><use href="#plus"/></svg>
<svg class="a" style="left:85px;top:167px;" width="16" height="16"><use href="#f_ip"/></svg>
<span class="t" style="left:106.7px;top:167.0px;font-size:11.5px;line-height:16px;letter-spacing:-0.49px;">Downloads</span>
<div class="a" style="left:79px;top:191px;width:7px;height:1px;background:repeating-linear-gradient(to right,#8c8c8c 0 1px,transparent 1px 2px)"></div>
<svg class="a" style="left:70px;top:187px;" width="9" height="9"><use href="#plus"/></svg>
<svg class="a" style="left:85px;top:183px;" width="16" height="16"><use href="#iptemp"/></svg>
<div class="a " style="left:104px;top:183px;width:50px;height:16px;background:#e6e6e6;"></div>
<span class="t" style="left:106.7px;top:183.0px;font-size:11.5px;line-height:16px;letter-spacing:-0.47px;">IP - Temp</span>
<div class="a" style="left:60px;top:207px;width:7px;height:1px;background:repeating-linear-gradient(to right,#8c8c8c 0 1px,transparent 1px 2px)"></div>
<svg class="a" style="left:51px;top:203px;" width="9" height="9"><use href="#plus"/></svg>
<svg class="a" style="left:66px;top:199px;" width="16" height="16"><use href="#f_lex"/></svg>
<span class="t" style="left:87.3px;top:199.0px;font-size:11.5px;line-height:16px;letter-spacing:-0.48px;">Lexicons</span>
<div class="a" style="left:60px;top:223px;width:7px;height:1px;background:repeating-linear-gradient(to right,#8c8c8c 0 1px,transparent 1px 2px)"></div>
<svg class="a" style="left:51px;top:219px;" width="9" height="9"><use href="#plus"/></svg>
<svg class="a" style="left:66px;top:215px;" width="16" height="16"><use href="#f_ocr"/></svg>
<span class="t" style="left:87.3px;top:215.0px;font-size:11.5px;line-height:16px;letter-spacing:-0.65px;">OCR Profiles</span>
<div class="a" style="left:56px;top:239px;width:11px;height:1px;background:repeating-linear-gradient(to right,#8c8c8c 0 1px,transparent 1px 2px)"></div>
<svg class="a" style="left:66px;top:231px;" width="16" height="16"><use href="#f_scan"/></svg>
<span class="t" style="left:87.3px;top:231.0px;font-size:11.5px;line-height:16px;letter-spacing:-0.49px;">Scanner Profiles</span>
<div class="a" style="left:60px;top:255px;width:7px;height:1px;background:repeating-linear-gradient(to right,#8c8c8c 0 1px,transparent 1px 2px)"></div>
<svg class="a" style="left:51px;top:251px;" width="9" height="9"><use href="#plus"/></svg>
<svg class="a" style="left:66px;top:247px;" width="16" height="16"><use href="#f_sep"/></svg>
<span class="t" style="left:87.3px;top:247.0px;font-size:11.5px;line-height:16px;letter-spacing:-0.51px;">Separation Profiles</span>
<div class="a" style="left:41px;top:271px;width:7px;height:1px;background:repeating-linear-gradient(to right,#8c8c8c 0 1px,transparent 1px 2px)"></div>
<svg class="a" style="left:32px;top:267px;" width="9" height="9"><use href="#plus"/></svg>
<svg class="a" style="left:47px;top:263px;" width="16" height="16"><use href="#f_infra"/></svg>
<span class="t" style="left:67.9px;top:263.0px;font-size:11.5px;line-height:16px;letter-spacing:-0.52px;">Infrastructure</span>
<div class="a" style="left:41px;top:287px;width:7px;height:1px;background:repeating-linear-gradient(to right,#8c8c8c 0 1px,transparent 1px 2px)"></div>
<svg class="a" style="left:32px;top:283px;" width="9" height="9"><use href="#plus"/></svg>
<svg class="a" style="left:47px;top:279px;" width="16" height="16"><use href="#f_rep"/></svg>
<span class="t" style="left:67.9px;top:279.0px;font-size:11.5px;line-height:16px;letter-spacing:-0.54px;">Reports</span>
<div class="a " style="left:289px;top:73px;width:1147px;height:736px;background:#fff;border:1px solid #d0d0d0;"></div>
<div class="a " style="left:293px;top:76px;width:1141px;height:730px;background:#f0f0f0;"></div>
<div class="a " style="left:346px;top:55px;width:52px;height:19px;background:#f0f0f0;border:1px solid #d9d9d9;"></div>
<div class="a " style="left:397px;top:55px;width:62px;height:19px;background:#f0f0f0;border:1px solid #d9d9d9;"></div>
<div class="a " style="left:289px;top:53px;width:58px;height:21px;background:#fff;border:1px solid #d9d9d9;border-bottom:none;"></div>
<span class="t" style="left:297.5px;top:54.5px;font-size:12px;line-height:16px;letter-spacing:-0.83px;">IP Profile</span>
<span class="t" style="left:350.0px;top:56.5px;font-size:12px;line-height:16px;letter-spacing:-0.86px;">Contents</span>
<span class="t" style="left:404.5px;top:56.5px;font-size:12px;line-height:16px;letter-spacing:-0.62px;">Advanced</span>
<svg class="a" style="left:295px;top:79px;" width="16" height="16"><use href="#save"/></svg>
<span class="t" style="left:314.0px;top:79.0px;font-size:12px;line-height:16px;letter-spacing:-1.12px;">Save</span>
<svg class="a" style="left:346px;top:79px;" width="16" height="16"><use href="#cancel"/></svg>
<span class="t" style="left:365.5px;top:79.0px;font-size:12px;line-height:16px;letter-spacing:-0.37px;">Cancel</span>
<div class="a " style="left:410px;top:79px;width:1px;height:16px;background:#c4c4c4;"></div>
<svg class="a" style="left:415px;top:79px;" width="16" height="16"><use href="#exec"/></svg>
<span class="t" style="left:434.0px;top:79.0px;font-size:12px;line-height:16px;letter-spacing:-0.39px;">Execute</span>
<div class="a " style="left:484px;top:79px;width:1px;height:16px;background:#c4c4c4;"></div>
<svg class="a" style="left:489px;top:79px;" width="16" height="16"><use href="#savepage"/></svg>
<span class="t" style="left:508.0px;top:79.0px;font-size:12px;line-height:16px;letter-spacing:-0.57px;">Save Processed Page</span>
<div class="a " style="left:627px;top:79px;width:1px;height:16px;background:#c4c4c4;"></div>
<div class="a " style="left:629px;top:76px;width:141px;height:22px;background:#eeeeee;border:1px solid #0078d7;"></div>
<svg class="a" style="left:631px;top:79px;" width="16" height="16"><use href="#diag"/></svg>
<span class="t" style="left:650.5px;top:79.0px;font-size:12px;line-height:16px;letter-spacing:-0.10px;">Diagnostics Mode On</span>
<div class="a " style="left:1433px;top:79px;width:1px;height:18px;background:#b4b4b4;"></div>
<div class="a " style="left:293px;top:100px;width:346px;height:255px;background:#fff;border:1px solid #828790;"></div>
<span class="t" style="left:300.5px;top:106.0px;font-size:11.5px;line-height:16px;letter-spacing:-0.67px;">Child Element</span>
<span class="t" style="left:501.5px;top:106.0px;font-size:11.5px;line-height:16px;letter-spacing:-0.53px;">Decription</span>
<div class="a " style="left:495px;top:101px;width:1px;height:25px;background:#e5e5e5;"></div>
<div class="a " style="left:294px;top:142px;width:344px;height:1px;background:#f0f0f0;"></div>
<div class="a " style="left:294px;top:159px;width:344px;height:1px;background:#f0f0f0;"></div>
<div class="a " style="left:294px;top:176px;width:344px;height:1px;background:#f0f0f0;"></div>
<div class="a " style="left:294px;top:193px;width:344px;height:1px;background:#f0f0f0;"></div>
<div class="a " style="left:294px;top:210px;width:344px;height:1px;background:#f0f0f0;"></div>
<div class="a " style="left:294px;top:227px;width:344px;height:1px;background:#f0f0f0;"></div>
<div class="a " style="left:294px;top:244px;width:344px;height:1px;background:#f0f0f0;"></div>
<div class="a " style="left:294px;top:261px;width:344px;height:1px;background:#f0f0f0;"></div>
<div class="a " style="left:294px;top:278px;width:344px;height:1px;background:#f0f0f0;"></div>
<div class="a " style="left:294px;top:295px;width:344px;height:1px;background:#f0f0f0;"></div>
<div class="a " style="left:294px;top:312px;width:344px;height:1px;background:#f0f0f0;"></div>
<div class="a " style="left:294px;top:329px;width:344px;height:1px;background:#f0f0f0;"></div>
<div class="a " style="left:495px;top:126px;width:1px;height:209px;background:#f0f0f0;"></div>
<svg class="a" style="left:299px;top:125.5px;" width="15" height="15"><use href="#s_thr"/></svg>
<span class="t" style="left:317.5px;top:126.5px;font-size:11.5px;line-height:16px;letter-spacing:-0.64px;">Threshold</span>
<div class="a" style="left:497px;top:126.5px;width:141px;height:16px;overflow:hidden">
<span class="t" style="left:4.5px;top:0.0px;font-size:11.5px;line-height:16px;letter-spacing:-0.51px;">Step (Threshold)</span>
</div>
<svg class="a" style="left:301px;top:144.5px;" width="15" height="15"><use href="#s_neg"/></svg>
<span class="t" style="left:317.5px;top:143.5px;font-size:11.5px;line-height:16px;letter-spacing:-0.44px;">Negative Region Removal</span>
<div class="a" style="left:497px;top:143.5px;width:141px;height:16px;overflow:hidden">
<span class="t" style="left:4.5px;top:0.0px;font-size:11.5px;line-height:16px;letter-spacing:-0.54px;">Step (Negative Region Remo</span>
</div>
<svg class="a" style="left:300px;top:160.5px;" width="15" height="15"><use href="#s_brem"/></svg>
<span class="t" style="left:317.5px;top:160.5px;font-size:11.5px;line-height:16px;letter-spacing:-0.64px;">Box Removal</span>
<div class="a" style="left:497px;top:160.5px;width:141px;height:16px;overflow:hidden">
<span class="t" style="left:4.5px;top:0.0px;font-size:11.5px;line-height:16px;letter-spacing:-0.52px;">Step (Box Removal)</span>
</div>
<div class="a " style="left:314.5px;top:177px;width:323.5px;height:16px;background:#0078d7;border-top:1px dotted #f2a63a;border-left:1px dotted #f2a63a;"></div>
<div class="a " style="left:495px;top:177px;width:1px;height:16px;background:#fff;"></div>
<svg class="a" style="left:300px;top:177.5px;" width="15" height="15"><use href="#s_bdet_sel"/></svg>
<span class="t" style="left:317.5px;top:177.5px;font-size:11.5px;line-height:16px;letter-spacing:-0.47px;color:#fff;">Box Detection</span>
<div class="a" style="left:497px;top:177.5px;width:141px;height:16px;overflow:hidden">
<span class="t" style="left:4.5px;top:0.0px;font-size:11.5px;line-height:16px;letter-spacing:-0.43px;color:#fff;">Step (Box Detection)</span>
</div>
<div class="a " style="left:294px;top:336px;width:344px;height:17px;background:#f0f0f0;"></div>
<div class="a " style="left:312px;top:336px;width:263px;height:17px;background:#cdcdcd;"></div>
<svg class="a" style="left:299px;top:339.5px;" width="7" height="10"><use href="#sa_l"/></svg>
<svg class="a" style="left:626.5px;top:339.5px;" width="7" height="10"><use href="#sa_r"/></svg>
<div class="a" style="left:293px;top:356px;width:346px;height:26px;background:linear-gradient(#fdfdfd,#f0f0f0)"></div>
<svg class="a" style="left:296px;top:360px;" width="14" height="14"><use href="#addc"/></svg>
<span class="t" style="left:314.5px;top:359.0px;font-size:12px;line-height:16px;letter-spacing:-0.18px;">Add</span>
<svg class="a" style="left:342px;top:366px;" width="5.5" height="3.2"><use href="#ddk"/></svg>
<svg class="a" style="left:353px;top:359px;" width="16" height="16"><use href="#delc"/></svg>
<span class="t" style="left:373.0px;top:359.0px;font-size:12px;line-height:16px;letter-spacing:-0.54px;">Delete</span>
<div class="a " style="left:414px;top:359px;width:1px;height:17px;background:#c4c4c4;"></div>
<svg class="a" style="left:420px;top:359px;" width="14" height="16"><use href="#mvup"/></svg>
<span class="t" style="left:438.5px;top:359.0px;font-size:12px;line-height:16px;letter-spacing:-0.17px;">Move Up</span>
<svg class="a" style="left:495px;top:359px;" width="14" height="16"><use href="#mvdn"/></svg>
<span class="t" style="left:513.5px;top:359.0px;font-size:12px;line-height:16px;letter-spacing:-0.04px;color:#808080;">Move Down</span>
<div class="a " style="left:293px;top:404px;width:344px;height:402px;background:#fff;border:1px solid #d9d9d9;"></div>
<div class="a " style="left:295px;top:386px;width:54px;height:19px;background:#f0f0f0;border:1px solid #d9d9d9;"></div>
<div class="a " style="left:348px;top:386px;width:79px;height:19px;background:#f0f0f0;border:1px solid #d9d9d9;"></div>
<div class="a " style="left:426px;top:384px;width:109px;height:21px;background:#fff;border:1px solid #d9d9d9;border-bottom:none;"></div>
<span class="t" style="left:301.0px;top:387.5px;font-size:11.5px;line-height:16px;letter-spacing:-0.61px;">IP Profile</span>
<span class="t" style="left:355.0px;top:387.5px;font-size:11.5px;line-height:16px;letter-spacing:-0.47px;">Selected Step</span>
<span class="t" style="left:434.0px;top:385.5px;font-size:11.5px;line-height:16px;letter-spacing:-0.67px;">Selected Command</span>
<div class="a " style="left:300px;top:409px;width:332px;height:269px;background:#fff;border:1px solid #828790;"></div>
<div class="a " style="left:301px;top:410px;width:21px;height:209px;background:#f0f4fb;"></div>
<div class="a " style="left:301px;top:410px;width:330px;height:16px;background:#f0f4fb;"></div>
<svg class="a" style="left:306px;top:416px;" width="10" height="6"><use href="#chd"/></svg>
<span class="t" style="left:326.0px;top:411.0px;font-size:12.5px;line-height:16px;letter-spacing:-0.09px;font-weight:700;">General</span>
<div class="a " style="left:322px;top:442px;width:309px;height:1px;background:#f0f4fb;"></div>
<div class="a " style="left:455px;top:427px;width:1px;height:15px;background:#f0f4fb;"></div>
<svg class="a" style="left:306px;top:432px;" width="10" height="6"><use href="#chd"/></svg>
<div class="a" style="left:322px;top:427px;width:133px;height:16px;overflow:hidden">
<span class="t" style="left:4.5px;top:0.0px;font-size:11.5px;line-height:16px;letter-spacing:-0.72px;">Size Range</span>
</div>
<div class="a" style="left:456px;top:427px;width:175px;height:16px;overflow:hidden">
<span class="t" style="left:3.5px;top:0.0px;font-size:11.5px;line-height:16px;letter-spacing:0.21px;font-weight:700;">6pt - 16pt</span>
</div>
<div class="a " style="left:322px;top:458px;width:309px;height:1px;background:#f0f4fb;"></div>
<div class="a " style="left:455px;top:443px;width:1px;height:15px;background:#f0f4fb;"></div>
<div class="a" style="left:322px;top:443px;width:133px;height:16px;overflow:hidden">
<span class="t" style="left:25.5px;top:0.0px;font-size:11.5px;line-height:16px;letter-spacing:-1.11px;">Minimum</span>
</div>
<div class="a" style="left:456px;top:443px;width:175px;height:16px;overflow:hidden">
<span class="t" style="left:3.5px;top:0.0px;font-size:11.5px;line-height:16px;letter-spacing:-0.12px;font-weight:700;">6pt</span>
</div>
<div class="a " style="left:322px;top:474px;width:309px;height:1px;background:#f0f4fb;"></div>
<div class="a " style="left:455px;top:459px;width:1px;height:15px;background:#f0f4fb;"></div>
<div class="a" style="left:322px;top:459px;width:133px;height:16px;overflow:hidden">
<span class="t" style="left:25.5px;top:0.0px;font-size:11.5px;line-height:16px;letter-spacing:-1.14px;">Maximum</span>
</div>
<div class="a" style="left:456px;top:459px;width:175px;height:16px;overflow:hidden">
<span class="t" style="left:3.5px;top:0.0px;font-size:11.5px;line-height:16px;letter-spacing:-0.22px;font-weight:700;">16pt</span>
</div>
<div class="a " style="left:322px;top:490px;width:309px;height:1px;background:#f0f4fb;"></div>
<div class="a " style="left:455px;top:475px;width:1px;height:15px;background:#f0f4fb;"></div>
<div class="a" style="left:322px;top:475px;width:133px;height:16px;overflow:hidden">
<span class="t" style="left:4.5px;top:0.0px;font-size:11.5px;line-height:16px;letter-spacing:-0.55px;">Minimum Aspect Ratio</span>
</div>
<div class="a" style="left:456px;top:475px;width:175px;height:16px;overflow:hidden">
<span class="t" style="left:3.5px;top:0.0px;font-size:11.5px;line-height:16px;letter-spacing:-0.01px;font-weight:700;">70%</span>
</div>
<div class="a " style="left:322px;top:506px;width:309px;height:1px;background:#f0f4fb;"></div>
<div class="a " style="left:455px;top:491px;width:1px;height:15px;background:#f0f4fb;"></div>
<div class="a" style="left:322px;top:491px;width:133px;height:16px;overflow:hidden">
<span class="t" style="left:4.5px;top:0.0px;font-size:11.5px;line-height:16px;letter-spacing:-0.56px;">Maximum Aspect Ratio</span>
</div>
<div class="a" style="left:456px;top:491px;width:175px;height:16px;overflow:hidden">
<span class="t" style="left:3.5px;top:0.0px;font-size:11.5px;line-height:16px;letter-spacing:-1.14px;">150%</span>
</div>
<div class="a " style="left:322px;top:522px;width:309px;height:1px;background:#f0f4fb;"></div>
<div class="a " style="left:455px;top:507px;width:1px;height:15px;background:#f0f4fb;"></div>
<div class="a" style="left:322px;top:507px;width:133px;height:16px;overflow:hidden">
<span class="t" style="left:4.5px;top:0.0px;font-size:11.5px;line-height:16px;letter-spacing:-0.62px;">Maximum Border Thickness</span>
</div>
<div class="a" style="left:456px;top:507px;width:175px;height:16px;overflow:hidden">
<span class="t" style="left:3.5px;top:0.0px;font-size:11.5px;line-height:16px;letter-spacing:-1.51px;">20%</span>
</div>
<div class="a " style="left:301px;top:522px;width:330px;height:17px;background:#f0f4fb;"></div>
<svg class="a" style="left:306px;top:528px;" width="10" height="6"><use href="#chd"/></svg>
<span class="t" style="left:326.0px;top:523.0px;font-size:12.5px;line-height:16px;letter-spacing:-0.47px;font-weight:700;">Image Preprocessing</span>
<div class="a " style="left:322px;top:554px;width:309px;height:1px;background:#f0f4fb;"></div>
<div class="a " style="left:455px;top:539px;width:1px;height:15px;background:#f0f4fb;"></div>
<svg class="a" style="left:308px;top:542px;" width="6" height="10"><use href="#chr"/></svg>
<div class="a" style="left:322px;top:539px;width:133px;height:16px;overflow:hidden">
<span class="t" style="left:4.5px;top:0.0px;font-size:11.5px;line-height:16px;letter-spacing:-0.54px;">Binarization Settings</span>
</div>
<div class="a" style="left:456px;top:539px;width:175px;height:16px;overflow:hidden">
<span class="t" style="left:3.5px;top:0.0px;font-size:11.5px;line-height:16px;letter-spacing:-0.89px;">Auto</span>
</div>
<div class="a " style="left:322px;top:570px;width:309px;height:1px;background:#f0f4fb;"></div>
<div class="a " style="left:455px;top:555px;width:1px;height:15px;background:#f0f4fb;"></div>
<div class="a" style="left:322px;top:555px;width:133px;height:16px;overflow:hidden">
<span class="t" style="left:4.5px;top:0.0px;font-size:11.5px;line-height:16px;letter-spacing:-0.74px;">Filtering</span>
</div>
<div class="a" style="left:456px;top:555px;width:175px;height:16px;overflow:hidden">
<span class="t" style="left:3.5px;top:0.0px;font-size:11.5px;line-height:16px;letter-spacing:-1.05px;">Low</span>
</div>
<div class="a " style="left:301px;top:570px;width:330px;height:17px;background:#f0f4fb;"></div>
<svg class="a" style="left:306px;top:576px;" width="10" height="6"><use href="#chd"/></svg>
<span class="t" style="left:326.0px;top:571.0px;font-size:12.5px;line-height:16px;letter-spacing:-0.68px;font-weight:700;">Command Info</span>
<div class="a " style="left:322px;top:602px;width:309px;height:1px;background:#f0f4fb;"></div>
<div class="a " style="left:455px;top:587px;width:1px;height:15px;background:#f0f4fb;"></div>
<div class="a" style="left:322px;top:587px;width:133px;height:16px;overflow:hidden">
<span class="t" style="left:4.5px;top:0.0px;font-size:11.5px;line-height:16px;letter-spacing:-0.63px;color:#7a7a7a;">Command Type</span>
</div>
<div class="a" style="left:456px;top:587px;width:175px;height:16px;overflow:hidden">
<span class="t" style="left:3.5px;top:0.0px;font-size:11.5px;line-height:16px;letter-spacing:-0.47px;color:#7a7a7a;">Box Detection</span>
</div>
<div class="a " style="left:322px;top:618px;width:309px;height:1px;background:#f0f4fb;"></div>
<div class="a " style="left:455px;top:603px;width:1px;height:15px;background:#f0f4fb;"></div>
<div class="a" style="left:322px;top:603px;width:133px;height:16px;overflow:hidden">
<span class="t" style="left:4.5px;top:0.0px;font-size:11.5px;line-height:16px;letter-spacing:-0.62px;color:#7a7a7a;">Supported Pixel Formats</span>
</div>
<div class="a" style="left:456px;top:603px;width:175px;height:16px;overflow:hidden">
<span class="t" style="left:3.5px;top:0.0px;font-size:11.5px;line-height:16px;letter-spacing:-0.45px;color:#7a7a7a;">8 Bit Grayscale, 24 Bit RGB, 32 Bit R</span>
</div>
<div class="a " style="left:300px;top:683px;width:331px;height:116px;background:#e6e6e6;border:1px solid #a0a0a0;border-top:2px solid #777;border-left:2px solid #777;border-right-color:#fff;border-bottom-color:#fff;"></div>
<div class="a" style="left:302px;top:685px;width:310px;height:113px;overflow:hidden">
<span class="t" style="left:3.0px;top:2.8px;font-size:12px;line-height:16px;letter-spacing:-0.02px;font-weight:700;font-family:'Liberation Serif',serif;">Maximum Aspect Ratio</span>
<span class="t" style="left:3px;top:21.800px;font-size:12px;line-height:16px;font-family:'Liberation Serif',serif;font-style:italic;letter-spacing:.02px"><b>Type:</b> <u>Double</u>, <b>Default:</b> <u>150%</u>, <b>Range:</b> <u>100% - 400%</u></span>
<span class="t" style="left:3.0px;top:41.0px;font-size:12px;line-height:16px;letter-spacing:-0.01px;font-family:'Liberation Serif',serif;">The maximum aspect ratio of any blob to be considered a</span>
<span class="t" style="left:3.0px;top:54.8px;font-size:12px;line-height:16px;letter-spacing:-0.37px;font-family:'Liberation Serif',serif;">checkbox.</span>
<span class="t" style="left:3.0px;top:74.0px;font-size:12px;line-height:16px;letter-spacing:-0.11px;font-weight:700;font-family:'Liberation Serif',serif;">Remarks</span>
<span class="t" style="left:3.0px;top:91.0px;font-size:12px;line-height:16px;letter-spacing:-0.00px;font-family:'Liberation Serif',serif;">Defines how &quot;short and fat&quot; checkboxes can be. The aspect</span>
<span class="t" style="left:3.0px;top:104.0px;font-size:12px;line-height:16px;letter-spacing:0.02px;font-family:'Liberation Serif',serif;">ratio of a blob is calculated as width / height</span>
</div>
<div class="a " style="left:613px;top:685px;width:17px;height:113px;background:#f0f0f0;"></div>
<div class="a " style="left:614px;top:718px;width:15px;height:18px;background:#cdcdcd;"></div>
<svg class="a" style="left:615.5px;top:702px;" width="12" height="8"><use href="#sa_u"/></svg>
<svg class="a" style="left:615.5px;top:773px;" width="12" height="8"><use href="#sa_d"/></svg>
<div class="a" style="left:643px;top:100px;width:391px;height:25px;background:linear-gradient(#fdfdfd,#f0f0f0)"></div>
<span class="t" style="left:646.5px;top:105.0px;font-size:13px;line-height:16px;letter-spacing:-0.97px;">Batch:</span>
<div class="a " style="left:684px;top:102px;width:321px;height:21px;background:#e1e1e1;border:1px solid #adadad;"></div>
<div class="a" style="left:685px;top:103px;width:305px;height:19px;overflow:hidden">
<span class="t" style="left:5.5px;top:1.5px;font-size:13px;line-height:16px;letter-spacing:-0.68px;">Consultant - IP and OCR•00 Source Set (Perm IP Applied)</span>
</div>
<svg class="a" style="left:988.5px;top:106.5px;" width="14" height="12"><use href="#c_tree"/></svg>
<svg class="a" style="left:1015px;top:104px;" width="13" height="15"><use href="#c_doc"/></svg>
<div class="a " style="left:643px;top:126px;width:391px;height:241px;background:#fff;border:1px solid #828790;"></div>
<div class="a " style="left:1016px;top:127px;width:17px;height:239px;background:#f0f0f0;"></div>
<div class="a " style="left:1016px;top:145px;width:17px;height:175px;background:#cdcdcd;"></div>
<svg class="a" style="left:1018.6px;top:133px;" width="10" height="7"><use href="#sa_u"/></svg>
<svg class="a" style="left:1018.6px;top:353px;" width="10" height="7"><use href="#sa_d"/></svg>
<svg class="a" style="left:645px;top:130.5px;" width="32" height="27"><use href="#bigfold"/></svg>
<span class="t" style="left:679.5px;top:137.0px;font-size:12px;line-height:16px;letter-spacing:-0.51px;">00 Source Set (Perm IP Applied)</span>
<div class="a" style="left:661px;top:162px;width:1px;height:184px;background:repeating-linear-gradient(to bottom,#000 0 1px,transparent 1px 2px)"></div>
<div class="a" style="left:666px;top:179px;width:11px;height:1px;background:repeating-linear-gradient(to right,#000 0 1px,transparent 1px 2px)"></div>
<svg class="a" style="left:657px;top:175px;" width="9" height="9"><use href="#plusk"/></svg>
<svg class="a" style="left:679px;top:164px;" width="30" height="30"><use href="#docpdf"/></svg>
<span class="t" style="left:711.5px;top:166.5px;font-size:12px;line-height:16px;letter-spacing:-0.61px;">Document (1)</span>
<div class="a" style="left:711px;top:181px;width:304px;height:16px;overflow:hidden">
<span class="t" style="left:0.5px;top:0.0px;font-size:12px;line-height:16px;letter-spacing:-0.40px;color:#555;">Application for Cow Ownership - Licensee (filled and scanned</span>
</div>
<div class="a" style="left:666px;top:213px;width:11px;height:1px;background:repeating-linear-gradient(to right,#000 0 1px,transparent 1px 2px)"></div>
<svg class="a" style="left:657px;top:209px;" width="9" height="9"><use href="#plusk"/></svg>
<svg class="a" style="left:677px;top:199px;" width="32" height="27"><use href="#bigfold"/></svg>
<span class="t" style="left:711.5px;top:205.0px;font-size:12px;line-height:16px;letter-spacing:-0.45px;">Folder (2)</span>
<div class="a" style="left:666px;top:247px;width:11px;height:1px;background:repeating-linear-gradient(to right,#000 0 1px,transparent 1px 2px)"></div>
<svg class="a" style="left:657px;top:243px;" width="9" height="9"><use href="#plusk"/></svg>
<svg class="a" style="left:677px;top:233px;" width="32" height="27"><use href="#bigfold"/></svg>
<span class="t" style="left:711.5px;top:239.0px;font-size:12px;line-height:16px;letter-spacing:-0.45px;">Folder (3)</span>
<div class="a" style="left:666px;top:281px;width:11px;height:1px;background:repeating-linear-gradient(to right,#000 0 1px,transparent 1px 2px)"></div>
<svg class="a" style="left:657px;top:277px;" width="9" height="9"><use href="#plusk"/></svg>
<svg class="a" style="left:679px;top:266px;" width="30" height="30"><use href="#docpdf"/></svg>
<div class="a " style="left:709px;top:264px;width:150px;height:34px;background:#cccccc;border:1px dotted #400;"></div>
<span class="t" style="left:711.5px;top:268.5px;font-size:12px;line-height:16px;letter-spacing:-0.61px;">Document (4)</span>
<div class="a" style="left:711px;top:283px;width:304px;height:16px;overflow:hidden">
<span class="t" style="left:0.5px;top:0.0px;font-size:12px;line-height:16px;letter-spacing:-0.52px;color:#f3efa0;">Matt_termination_Signed.pdf</span>
</div>
<div class="a" style="left:666px;top:315px;width:11px;height:1px;background:repeating-linear-gradient(to right,#000 0 1px,transparent 1px 2px)"></div>
<svg class="a" style="left:657px;top:311px;" width="9" height="9"><use href="#plusk"/></svg>
<svg class="a" style="left:679px;top:300px;" width="30" height="30"><use href="#docpdf"/></svg>
<span class="t" style="left:711.5px;top:302.5px;font-size:12px;line-height:16px;letter-spacing:-0.61px;">Document (5)</span>
<div class="a" style="left:711px;top:317px;width:304px;height:16px;overflow:hidden">
<span class="t" style="left:0.5px;top:0.0px;font-size:12px;line-height:16px;letter-spacing:-0.93px;color:#555;">AWC.pdf</span>
</div>
<div class="a" style="left:666px;top:349px;width:11px;height:1px;background:repeating-linear-gradient(to right,#000 0 1px,transparent 1px 2px)"></div>
<svg class="a" style="left:657px;top:345px;" width="9" height="9"><use href="#plusk"/></svg>
<svg class="a" style="left:677px;top:335px;" width="32" height="27"><use href="#bigfold"/></svg>
<span class="t" style="left:711.5px;top:341.0px;font-size:12px;line-height:16px;letter-spacing:-0.45px;">Folder (6)</span>
<span class="t" style="left:1190.0px;top:102.5px;font-size:11.5px;line-height:16px;letter-spacing:-0.55px;">Processing Results</span>
<div class="a " style="left:1038px;top:120px;width:396px;height:247px;background:#fff;border:1px solid #828790;"></div>
<div class="a " style="left:1240px;top:121px;width:1px;height:25px;background:#e5e5e5;"></div>
<div class="a " style="left:1240px;top:146px;width:1px;height:202px;background:#f0f0f0;"></div>
<div class="a " style="left:1320px;top:121px;width:1px;height:25px;background:#e5e5e5;"></div>
<div class="a " style="left:1320px;top:146px;width:1px;height:202px;background:#f0f0f0;"></div>
<div class="a " style="left:1420px;top:121px;width:1px;height:25px;background:#e5e5e5;"></div>
<div class="a " style="left:1420px;top:146px;width:1px;height:202px;background:#f0f0f0;"></div>
<span class="t" style="left:1046.5px;top:126.0px;font-size:11.5px;line-height:16px;letter-spacing:-1.05px;">Step</span>
<span class="t" style="left:1268.5px;top:126.0px;font-size:11.5px;line-height:16px;letter-spacing:-0.60px;">Run Time</span>
<span class="t" style="left:1334.0px;top:126.0px;font-size:11.5px;line-height:16px;letter-spacing:-0.59px;">Image Modified</span>
<span class="t" style="left:1426.5px;top:126.0px;font-size:11.5px;line-height:16px;">F</span>
<div class="a " style="left:1039px;top:162px;width:394px;height:1px;background:#f0f0f0;"></div>
<div class="a " style="left:1039px;top:179px;width:394px;height:1px;background:#f0f0f0;"></div>
<div class="a " style="left:1039px;top:196px;width:394px;height:1px;background:#f0f0f0;"></div>
<div class="a " style="left:1039px;top:213px;width:394px;height:1px;background:#f0f0f0;"></div>
<div class="a " style="left:1039px;top:230px;width:394px;height:1px;background:#f0f0f0;"></div>
<div class="a " style="left:1039px;top:247px;width:394px;height:1px;background:#f0f0f0;"></div>
<div class="a " style="left:1039px;top:264px;width:394px;height:1px;background:#f0f0f0;"></div>
<div class="a " style="left:1039px;top:281px;width:394px;height:1px;background:#f0f0f0;"></div>
<div class="a " style="left:1039px;top:298px;width:394px;height:1px;background:#f0f0f0;"></div>
<div class="a " style="left:1039px;top:315px;width:394px;height:1px;background:#f0f0f0;"></div>
<div class="a " style="left:1039px;top:332px;width:394px;height:1px;background:#f0f0f0;"></div>
<svg class="a" style="left:1044px;top:146px;" width="15" height="15"><use href="#s_thr"/></svg>
<span class="t" style="left:1062.5px;top:147.0px;font-size:11.5px;line-height:16px;letter-spacing:-0.64px;color:#1e7d1e;">Threshold</span>
<span class="t" style="left:1289.5px;top:147.0px;font-size:11.5px;line-height:16px;letter-spacing:-1.37px;color:#1e7d1e;">15ms</span>
<span class="t" style="left:1358.5px;top:147.0px;font-size:11.5px;line-height:16px;letter-spacing:-0.41px;color:#1e7d1e;">True</span>
<span class="t" style="left:1426.5px;top:147.0px;font-size:11.5px;line-height:16px;color:#1e7d1e;">F</span>
<svg class="a" style="left:1046px;top:165px;" width="15" height="15"><use href="#s_neg"/></svg>
<span class="t" style="left:1062.5px;top:164.0px;font-size:11.5px;line-height:16px;letter-spacing:-0.44px;">Negative Region Removal</span>
<span class="t" style="left:1289.5px;top:164.0px;font-size:11.5px;line-height:16px;letter-spacing:-1.37px;">43ms</span>
<span class="t" style="left:1357.5px;top:164.0px;font-size:11.5px;line-height:16px;letter-spacing:-1.03px;">False</span>
<span class="t" style="left:1426.5px;top:164.0px;font-size:11.5px;line-height:16px;">F</span>
<svg class="a" style="left:1045px;top:181px;" width="15" height="15"><use href="#s_brem"/></svg>
<span class="t" style="left:1062.5px;top:181.0px;font-size:11.5px;line-height:16px;letter-spacing:-0.64px;">Box Removal</span>
<span class="t" style="left:1289.5px;top:181.0px;font-size:11.5px;line-height:16px;letter-spacing:-1.37px;">62ms</span>
<span class="t" style="left:1357.5px;top:181.0px;font-size:11.5px;line-height:16px;letter-spacing:-1.03px;">False</span>
<span class="t" style="left:1426.5px;top:181.0px;font-size:11.5px;line-height:16px;">F</span>
<svg class="a" style="left:1045px;top:198px;" width="15" height="15"><use href="#s_bdet"/></svg>
<span class="t" style="left:1062.5px;top:198.0px;font-size:11.5px;line-height:16px;letter-spacing:-0.47px;">Box Detection</span>
<span class="t" style="left:1289.5px;top:198.0px;font-size:11.5px;line-height:16px;letter-spacing:-1.37px;">77ms</span>
<span class="t" style="left:1357.5px;top:198.0px;font-size:11.5px;line-height:16px;letter-spacing:-1.03px;">False</span>
<span class="t" style="left:1426.5px;top:198.0px;font-size:11.5px;line-height:16px;">F</span>
<svg class="a" style="left:1045px;top:215px;" width="15" height="15"><use href="#s_end"/></svg>
<span class="t" style="left:1062.5px;top:215.0px;font-size:13px;line-height:16px;letter-spacing:-0.45px;font-weight:700;">END RESULT</span>
<span class="t" style="left:1279.5px;top:215.0px;font-size:13px;line-height:16px;letter-spacing:-1.62px;font-weight:700;">197ms</span>
<span class="t" style="left:1355.0px;top:215.0px;font-size:13px;line-height:16px;letter-spacing:-1.06px;font-weight:700;">False</span>
<span class="t" style="left:1426.5px;top:215.0px;font-size:13px;line-height:16px;font-weight:700;">F</span>
<div class="a " style="left:1434px;top:121px;width:3px;height:245px;background:#f0f0f0;"></div>
<div class="a " style="left:1039px;top:349px;width:394px;height:17px;background:#f0f0f0;"></div>
<div class="a " style="left:1057px;top:349px;width:305px;height:17px;background:#cdcdcd;"></div>
<svg class="a" style="left:1044px;top:351.7px;" width="7" height="10"><use href="#sa_l"/></svg>
<svg class="a" style="left:1420px;top:351.7px;" width="7" height="10"><use href="#sa_r"/></svg>
<div class="a " style="left:643px;top:371px;width:194px;height:436px;background:#fff;border:1px solid #828790;"></div>
<div class="a" style="left:656px;top:388px;width:1px;height:361px;background:repeating-linear-gradient(to bottom,#7d7d7d 0 1px,transparent 1px 2px)"></div>
<div class="a" style="left:675px;top:419px;width:1px;height:42px;background:repeating-linear-gradient(to bottom,#7d7d7d 0 1px,transparent 1px 2px)"></div>
<div class="a" style="left:675px;top:483px;width:1px;height:58px;background:repeating-linear-gradient(to bottom,#7d7d7d 0 1px,transparent 1px 2px)"></div>
<div class="a" style="left:675px;top:563px;width:1px;height:58px;background:repeating-linear-gradient(to bottom,#7d7d7d 0 1px,transparent 1px 2px)"></div>
<div class="a" style="left:675px;top:643px;width:1px;height:74px;background:repeating-linear-gradient(to bottom,#7d7d7d 0 1px,transparent 1px 2px)"></div>
<svg class="a" style="left:648px;top:375px;" width="16" height="12"><use href="#ofold"/></svg>
<span class="t" style="left:669.0px;top:373.0px;font-size:11.5px;line-height:16px;letter-spacing:-0.67px;">All Steps</span>
<div class="a" style="left:657px;top:397px;width:10px;height:1px;background:repeating-linear-gradient(to right,#7d7d7d 0 1px,transparent 1px 2px)"></div>
<svg class="a" style="left:668px;top:391px;" width="14" height="11"><use href="#img"/></svg>
<span class="t" style="left:688.5px;top:389.0px;font-size:11.5px;line-height:16px;letter-spacing:-0.57px;">Input Image</span>
<div class="a" style="left:661px;top:413px;width:6px;height:1px;background:repeating-linear-gradient(to right,#7d7d7d 0 1px,transparent 1px 2px)"></div>
<svg class="a" style="left:652px;top:409px;" width="9" height="9"><use href="#minus"/></svg>
<svg class="a" style="left:668px;top:407px;" width="16" height="12"><use href="#ofold"/></svg>
<span class="t" style="left:688.5px;top:405.0px;font-size:11.5px;line-height:16px;letter-spacing:-0.64px;">Threshold</span>
<div class="a" style="left:676px;top:429px;width:10px;height:1px;background:repeating-linear-gradient(to right,#7d7d7d 0 1px,transparent 1px 2px)"></div>
<svg class="a" style="left:687px;top:423px;" width="14" height="11"><use href="#img"/></svg>
<span class="t" style="left:707.0px;top:421.0px;font-size:11.5px;line-height:16px;letter-spacing:-0.57px;">Input Image</span>
<div class="a" style="left:676px;top:445px;width:10px;height:1px;background:repeating-linear-gradient(to right,#7d7d7d 0 1px,transparent 1px 2px)"></div>
<svg class="a" style="left:687px;top:439px;" width="14" height="11"><use href="#img"/></svg>
<span class="t" style="left:707.0px;top:437.0px;font-size:11.5px;line-height:16px;letter-spacing:-0.52px;">Output Image</span>
<div class="a" style="left:676px;top:461px;width:10px;height:1px;background:repeating-linear-gradient(to right,#7d7d7d 0 1px,transparent 1px 2px)"></div>
<svg class="a" style="left:688px;top:453px;" width="12" height="15"><use href="#log"/></svg>
<span class="t" style="left:707.0px;top:453.0px;font-size:11.5px;line-height:16px;letter-spacing:-0.49px;">Execution Log</span>
<div class="a" style="left:661px;top:477px;width:6px;height:1px;background:repeating-linear-gradient(to right,#7d7d7d 0 1px,transparent 1px 2px)"></div>
<svg class="a" style="left:652px;top:473px;" width="9" height="9"><use href="#minus"/></svg>
<svg class="a" style="left:668px;top:471px;" width="16" height="12"><use href="#ofold"/></svg>
<span class="t" style="left:688.5px;top:469.0px;font-size:11.5px;line-height:16px;letter-spacing:-0.44px;">Negative Region Removal</span>
<div class="a" style="left:676px;top:493px;width:10px;height:1px;background:repeating-linear-gradient(to right,#7d7d7d 0 1px,transparent 1px 2px)"></div>
<svg class="a" style="left:687px;top:487px;" width="14" height="11"><use href="#img"/></svg>
<span class="t" style="left:707.0px;top:485.0px;font-size:11.5px;line-height:16px;letter-spacing:-0.57px;">Input Image</span>
<div class="a" style="left:676px;top:509px;width:10px;height:1px;background:repeating-linear-gradient(to right,#7d7d7d 0 1px,transparent 1px 2px)"></div>
<svg class="a" style="left:687px;top:503px;" width="14" height="11"><use href="#img"/></svg>
<span class="t" style="left:707.0px;top:501.0px;font-size:11.5px;line-height:16px;letter-spacing:-0.80px;">Filled</span>
<div class="a" style="left:676px;top:525px;width:10px;height:1px;background:repeating-linear-gradient(to right,#7d7d7d 0 1px,transparent 1px 2px)"></div>
<svg class="a" style="left:687px;top:519px;" width="14" height="11"><use href="#img"/></svg>
<span class="t" style="left:707.0px;top:517.0px;font-size:11.5px;line-height:16px;letter-spacing:-0.58px;">Candidates</span>
<div class="a" style="left:676px;top:541px;width:10px;height:1px;background:repeating-linear-gradient(to right,#7d7d7d 0 1px,transparent 1px 2px)"></div>
<svg class="a" style="left:688px;top:533px;" width="12" height="15"><use href="#log"/></svg>
<span class="t" style="left:707.0px;top:533.0px;font-size:11.5px;line-height:16px;letter-spacing:-0.49px;">Execution Log</span>
<div class="a" style="left:661px;top:557px;width:6px;height:1px;background:repeating-linear-gradient(to right,#7d7d7d 0 1px,transparent 1px 2px)"></div>
<svg class="a" style="left:652px;top:553px;" width="9" height="9"><use href="#minus"/></svg>
<svg class="a" style="left:668px;top:551px;" width="16" height="12"><use href="#ofold"/></svg>
<span class="t" style="left:688.5px;top:549.0px;font-size:11.5px;line-height:16px;letter-spacing:-0.64px;">Box Removal</span>
<div class="a" style="left:676px;top:573px;width:10px;height:1px;background:repeating-linear-gradient(to right,#7d7d7d 0 1px,transparent 1px 2px)"></div>
<svg class="a" style="left:687px;top:567px;" width="14" height="11"><use href="#img"/></svg>
<span class="t" style="left:707.0px;top:565.0px;font-size:11.5px;line-height:16px;letter-spacing:-0.57px;">Input Image</span>
<div class="a" style="left:676px;top:589px;width:10px;height:1px;background:repeating-linear-gradient(to right,#7d7d7d 0 1px,transparent 1px 2px)"></div>
<svg class="a" style="left:687px;top:583px;" width="14" height="11"><use href="#img"/></svg>
<span class="t" style="left:707.0px;top:581.0px;font-size:11.5px;line-height:16px;letter-spacing:-0.76px;">Filtered</span>
<div class="a" style="left:676px;top:605px;width:10px;height:1px;background:repeating-linear-gradient(to right,#7d7d7d 0 1px,transparent 1px 2px)"></div>
<svg class="a" style="left:687px;top:599px;" width="14" height="11"><use href="#img"/></svg>
<span class="t" style="left:707.0px;top:597.0px;font-size:11.5px;line-height:16px;letter-spacing:-0.87px;">Lines</span>
<div class="a" style="left:676px;top:621px;width:10px;height:1px;background:repeating-linear-gradient(to right,#7d7d7d 0 1px,transparent 1px 2px)"></div>
<svg class="a" style="left:688px;top:613px;" width="12" height="15"><use href="#log"/></svg>
<span class="t" style="left:707.0px;top:613.0px;font-size:11.5px;line-height:16px;letter-spacing:-0.49px;">Execution Log</span>
<div class="a" style="left:661px;top:637px;width:6px;height:1px;background:repeating-linear-gradient(to right,#7d7d7d 0 1px,transparent 1px 2px)"></div>
<svg class="a" style="left:652px;top:633px;" width="9" height="9"><use href="#minus"/></svg>
<svg class="a" style="left:668px;top:631px;" width="16" height="12"><use href="#ofold"/></svg>
<span class="t" style="left:688.5px;top:629.0px;font-size:11.5px;line-height:16px;letter-spacing:-0.47px;">Box Detection</span>
<div class="a" style="left:676px;top:653px;width:10px;height:1px;background:repeating-linear-gradient(to right,#7d7d7d 0 1px,transparent 1px 2px)"></div>
<svg class="a" style="left:687px;top:647px;" width="14" height="11"><use href="#img"/></svg>
<span class="t" style="left:707.0px;top:645.0px;font-size:11.5px;line-height:16px;letter-spacing:-0.57px;">Input Image</span>
<div class="a" style="left:676px;top:669px;width:10px;height:1px;background:repeating-linear-gradient(to right,#7d7d7d 0 1px,transparent 1px 2px)"></div>
<svg class="a" style="left:687px;top:663px;" width="14" height="11"><use href="#img"/></svg>
<span class="t" style="left:707.0px;top:661.0px;font-size:11.5px;line-height:16px;letter-spacing:-0.76px;">Filtered</span>
<div class="a" style="left:676px;top:685px;width:10px;height:1px;background:repeating-linear-gradient(to right,#7d7d7d 0 1px,transparent 1px 2px)"></div>
<svg class="a" style="left:687px;top:679px;" width="14" height="11"><use href="#img"/></svg>
<span class="t" style="left:707.0px;top:677.0px;font-size:11.5px;line-height:16px;letter-spacing:-0.87px;">Lines</span>
<div class="a" style="left:676px;top:701px;width:10px;height:1px;background:repeating-linear-gradient(to right,#7d7d7d 0 1px,transparent 1px 2px)"></div>
<svg class="a" style="left:687px;top:695px;" width="14" height="11"><use href="#img"/></svg>
<div class="a " style="left:705px;top:693px;width:33px;height:16px;background:#ebebeb;"></div>
<span class="t" style="left:707.0px;top:693.0px;font-size:11.5px;line-height:16px;letter-spacing:-1.12px;">Boxes</span>
<div class="a" style="left:676px;top:717px;width:10px;height:1px;background:repeating-linear-gradient(to right,#7d7d7d 0 1px,transparent 1px 2px)"></div>
<svg class="a" style="left:688px;top:709px;" width="12" height="15"><use href="#log"/></svg>
<span class="t" style="left:707.0px;top:709.0px;font-size:11.5px;line-height:16px;letter-spacing:-0.49px;">Execution Log</span>
<div class="a" style="left:657px;top:733px;width:10px;height:1px;background:repeating-linear-gradient(to right,#7d7d7d 0 1px,transparent 1px 2px)"></div>
<svg class="a" style="left:668px;top:727px;" width="14" height="11"><use href="#img"/></svg>
<span class="t" style="left:688.5px;top:725.0px;font-size:11.5px;line-height:16px;letter-spacing:-0.52px;">Output Image</span>
<div class="a" style="left:657px;top:749px;width:10px;height:1px;background:repeating-linear-gradient(to right,#7d7d7d 0 1px,transparent 1px 2px)"></div>
<svg class="a" style="left:669px;top:741px;" width="12" height="15"><use href="#log"/></svg>
<span class="t" style="left:688.5px;top:741.0px;font-size:11.5px;line-height:16px;letter-spacing:-0.49px;">Execution Log</span>
<div class="a" style="left:841px;top:371px;width:593px;height:25px;background:linear-gradient(#fdfdfd,#f1f1f1)"></div>
<div class="a " style="left:887px;top:372px;width:23px;height:22px;background:#fff;border:1px solid #1f7fe0;"></div>
<svg class="a" style="left:844px;top:375px;" width="16" height="16"><use href="#v_ptr"/></svg>
<svg class="a" style="left:867px;top:375px;" width="16" height="16"><use href="#v_hand"/></svg>
<svg class="a" style="left:890px;top:375px;" width="16" height="16"><use href="#v_sel"/></svg>
<svg class="a" style="left:913px;top:375px;" width="16" height="16"><use href="#v_zreg"/></svg>
<svg class="a" style="left:936px;top:375px;" width="16" height="16"><use href="#v_zpage"/></svg>
<svg class="a" style="left:964px;top:375px;" width="16" height="16"><use href="#v_zin"/></svg>
<svg class="a" style="left:987px;top:375px;" width="16" height="16"><use href="#v_zout"/></svg>
<svg class="a" style="left:1010px;top:375px;" width="16" height="16"><use href="#v_z1"/></svg>
<svg class="a" style="left:1033px;top:375px;" width="16" height="16"><use href="#v_zfit"/></svg>
<svg class="a" style="left:1056px;top:375px;" width="16" height="16"><use href="#v_zw"/></svg>
<svg class="a" style="left:1079px;top:375px;" width="16" height="16"><use href="#v_zh"/></svg>
<svg class="a" style="left:1109px;top:375px;" width="16" height="16"><use href="#v_rcw"/></svg>
<svg class="a" style="left:1131px;top:375px;" width="16" height="16"><use href="#v_rccw"/></svg>
<svg class="a" style="left:1161px;top:375px;" width="16" height="16"><use href="#v_print"/></svg>
<svg class="a" style="left:1184px;top:375px;" width="16" height="16"><use href="#v_save"/></svg>
<svg class="a" style="left:1207px;top:375px;" width="16" height="16"><use href="#v_tools"/></svg>
<div class="a " style="left:960px;top:375px;width:1px;height:16px;background:#c4c4c4;"></div>
<div class="a " style="left:1103px;top:375px;width:1px;height:16px;background:#c4c4c4;"></div>
<div class="a " style="left:1155px;top:375px;width:1px;height:16px;background:#c4c4c4;"></div>
<div class="a " style="left:1432px;top:375px;width:1px;height:19px;background:#bdbdbd;"></div>
<div class="a " style="left:841px;top:396px;width:577px;height:387px;background:#fff;"></div>
<div class="a " style="left:1418px;top:396px;width:16px;height:387px;background:#f0f0f0;"></div>
<div class="a " style="left:1418px;top:527px;width:15px;height:183px;background:#c1c1c1;"></div>
<svg class="a" style="left:1421px;top:403px;" width="10" height="7"><use href="#sa_u"/></svg>
<svg class="a" style="left:1421px;top:771px;" width="10" height="7"><use href="#sa_d"/></svg>
<div class="a " style="left:1133px;top:396px;width:10px;height:1px;background:#9fd3ee;"></div>
<div class="a " style="left:842px;top:785px;width:63px;height:19px;background:#f0f0f0;border:1px solid #a0a0a0;border-right-color:#fff;border-bottom-color:#fff;"></div>
<span class="t" style="left:846.0px;top:787.5px;font-size:12.5px;line-height:16px;letter-spacing:-0.91px;">Scale: 34%</span>
<div class="a " style="left:909px;top:785px;width:94px;height:19px;background:#f0f0f0;border:1px solid #a0a0a0;border-right-color:#fff;border-bottom-color:#fff;"></div>
<span class="t" style="left:913.5px;top:787.5px;font-size:12.5px;line-height:16px;letter-spacing:-0.73px;">1700px x 2200px</span>
<div class="a " style="left:1005px;top:785px;width:79px;height:19px;background:#f0f0f0;border:1px solid #a0a0a0;border-right-color:#fff;border-bottom-color:#fff;"></div>
<span class="t" style="left:1009.5px;top:787.5px;font-size:12.5px;line-height:16px;letter-spacing:-0.52px;">8.50&quot; x 11.00&quot;</span>
<div class="a " style="left:1087px;top:785px;width:47px;height:19px;background:#f0f0f0;border:1px solid #a0a0a0;border-right-color:#fff;border-bottom-color:#fff;"></div>
<span class="t" style="left:1091.5px;top:787.5px;font-size:12.5px;line-height:16px;letter-spacing:-1.19px;">200 DPI</span>
<div class="a " style="left:1136px;top:785px;width:84px;height:19px;background:#f0f0f0;border:1px solid #a0a0a0;border-right-color:#fff;border-bottom-color:#fff;"></div>
<span class="t" style="left:1140.5px;top:787.5px;font-size:12.5px;line-height:16px;letter-spacing:-0.23px;">Black &amp; White</span>
<span class="t" style="left:904.5px;top:402.5px;font-size:8.5px;line-height:16px;transform:scaleX(0.9249);transform-origin:0 50%;color:#111;-webkit-text-stroke:.2px #111;">Reason for Termination?</span>
<span class="t" style="left:993.5px;top:396.5px;font-size:14px;line-height:16px;letter-spacing:-0.37px;color:#111;">Moving on up!</span>
<div class="a " style="left:992px;top:413px;width:347px;height:1px;background:#555;"></div>
<span class="t" style="left:904.5px;top:412.5px;font-size:8.5px;line-height:16px;transform:scaleX(0.9413);transform-origin:0 50%;color:#111;-webkit-text-stroke:.2px #111;">(If notice given attach to this form)</span>
<span class="t" style="left:904.5px;top:433.0px;font-size:8.5px;line-height:16px;transform:scaleX(0.9162);transform-origin:0 50%;color:#111;-webkit-text-stroke:.2px #111;">Have all personal belongings been obtained by employee:</span>
<span class="t" style="left:904.5px;top:454.0px;font-size:8.5px;line-height:16px;transform:scaleX(0.9252);transform-origin:0 50%;color:#111;-webkit-text-stroke:.2px #111;">Has all company property been returned:</span>
<span class="t" style="left:904.5px;top:474.5px;font-size:8.5px;line-height:16px;transform:scaleX(0.9050);transform-origin:0 50%;color:#111;-webkit-text-stroke:.2px #111;">(Including I.D. and security badges)</span>
<div class="a " style="left:1149px;top:435px;width:9.5px;height:11.5px;background:#064a08;border:1.500px solid #8fd0b0;box-shadow:0 0 0 .500px #9cc;"></div>
<span class="t" style="left:1170.5px;top:433.0px;font-size:8.5px;line-height:16px;transform:scaleX(0.8294);transform-origin:0 50%;color:#111;-webkit-text-stroke:.2px #111;">Yes</span>
<div class="a " style="left:1227px;top:435px;width:9.5px;height:11.5px;background:#ffc9cb;border:1px solid #9fb0c8;"></div>
<span class="t" style="left:1247.0px;top:433.0px;font-size:8.5px;line-height:16px;transform:scaleX(0.8743);transform-origin:0 50%;color:#111;-webkit-text-stroke:.2px #111;">No</span>
<div class="a " style="left:1081px;top:456.5px;width:9.5px;height:11.5px;background:#064a08;border:1.500px solid #8fd0b0;box-shadow:0 0 0 .500px #9cc;"></div>
<span class="t" style="left:1102.0px;top:454.0px;font-size:8.5px;line-height:16px;transform:scaleX(0.8294);transform-origin:0 50%;color:#111;-webkit-text-stroke:.2px #111;">Yes</span>
<div class="a " style="left:1153.5px;top:456.5px;width:9.5px;height:11.5px;background:#ffc9cb;border:1px solid #9fb0c8;"></div>
<span class="t" style="left:1177.5px;top:454.0px;font-size:8.5px;line-height:16px;transform:scaleX(0.8743);transform-origin:0 50%;color:#111;-webkit-text-stroke:.2px #111;">No</span>
<span class="t" style="left:904.5px;top:516.0px;font-size:8.5px;line-height:16px;transform:scaleX(0.8932);transform-origin:0 50%;color:#111;-webkit-text-stroke:.2px #111;">Supervisor  Signature</span>
<div class="a " style="left:980px;top:527px;width:220px;height:1px;background:#444;"></div>
<span class="t" style="left:1226.0px;top:516.0px;font-size:8.5px;line-height:16px;transform:scaleX(0.8801);transform-origin:0 50%;color:#111;-webkit-text-stroke:.2px #111;">Date</span>
<div class="a " style="left:1244.5px;top:527.5px;width:101px;height:1px;background:#444;"></div>
<span class="t" style="left:904.5px;top:536.5px;font-size:8.5px;line-height:16px;transform:scaleX(0.9065);transform-origin:0 50%;color:#111;-webkit-text-stroke:.2px #111;">Supervisor Name(Print)</span>
<div class="a " style="left:985px;top:548px;width:360px;height:1px;background:#444;"></div>
<span class="t" style="left:986.5px;top:531.0px;font-size:13px;line-height:16px;letter-spacing:0.12px;color:#111;">Mike King</span>
<span class="t" style="left:904.5px;top:557.0px;font-size:8.5px;line-height:16px;transform:scaleX(0.8835);transform-origin:0 50%;color:#111;-webkit-text-stroke:.2px #111;">Human Resources  Signature</span>
<div class="a " style="left:1005px;top:569px;width:195px;height:1px;background:#444;"></div>
<span class="t" style="left:1226.0px;top:557.0px;font-size:8.5px;line-height:16px;transform:scaleX(0.8801);transform-origin:0 50%;color:#111;-webkit-text-stroke:.2px #111;">Date</span>
<div class="a " style="left:1244.5px;top:569px;width:101px;height:1px;background:#444;"></div>
<span class="t" style="left:904.5px;top:577.0px;font-size:8.5px;line-height:16px;transform:scaleX(0.8983);transform-origin:0 50%;color:#111;-webkit-text-stroke:.2px #111;">Human Resources Name(Print)</span>
<div class="a " style="left:1011px;top:589px;width:331px;height:1px;background:#777;"></div>
<span class="t" style="left:1012.0px;top:571.5px;font-size:13px;line-height:16px;letter-spacing:0.08px;color:#111;">Shilah Jerkins</span>
<svg class="a" style="left:841px;top:396px" width="577" height="387" viewBox="841 396 577 387" fill="none" stroke-linecap="round"><g stroke="#bdbdbd" stroke-width=".8"><path d="M988 522l5-15M992 525l6-17M997 524l5-14M1002 526c2-7 5-11 7-8l-4 9M1009 523l5-12 3 2-5 9M1016 519c2-4 6-7 8-5M1021 511l8-3"/><path d="M1047 526l5-20M1049 520l4 4M1050 518l14-6 4-6M1063 507l3 12M1066 519l8-3M1076 518l5-1M1086 520l3 0"/><path d="M1088 545l6 4 4 8M1100 553l8 2M1112 552l6 5M1120 560l8 3 6 5M1095 566l8-3"/><path d="M1028 568l4-12M1033 568l5-13M1039 567c2-6 5-9 7-6M1047 563l6-5M1058 560l4-1M1066 558l3 0"/></g><g stroke="#6f6f6f" stroke-width=".9"><path d="M1083 532l-3 7"/><path d="M1025 548l-17 21-3-3 4-3M1008 569l8 5"/><path d="M1010 531l2 2" stroke="#aaa"/></g><g stroke="#bcbcbc" stroke-width=".9"><path d="M1250.500 515.800c-.5 4 0 8 1 10.800M1255 515.800c0 4 .5 8 1.500 10.800M1275 518.700l5-3M1276 519.700c3 .5 4 3 2 6.900"/><path d="M1304 520.500l2-.5M1309 521l2-1M1314 520l1 3M1318 519l0 4" stroke="#d2d2d2"/><path d="M1325 517.700l-.3 9.900" stroke="#a8a8a8"/><path d="M1251 554.700l1 11.800M1254.500 555l2 11M1268.300 556.700l.5 10.800M1273.700 556.200l5.400-.5M1275.200 557.100c1 2.500 2.500 5 3 7.900 0 1.500-1.500 2.500-3 3"/><path d="M1290.400 558c2-3.500 6-4 7-.5s-3 5-7 7l8-1.500M1302 560c2-1.500 4 0 3.500 2s-3 2.500-3.500 0M1309.200 559l.3 9M1317 560c2-2 4.500-2 4.500 0l-.5 8" stroke="#cacaca"/></g><g stroke="#8a8a8a" stroke-width="1"><path d="M1294 517.700c3-2 6.500-1 6 2.500s-3 5-5 6.400c-1.500-.5-1-2.500 .5-2.500"/></g><g stroke="#4a4a4a" stroke-width="1"><path d="M1267.800 507.400l-8.400 25.100M1271 518.200l.2 9.800M1289.500 508.400l-6 25.600M1263.800 551.700l-4.800 21.700M1286 556l-5.700 18.400"/><path d="M1287.500 550l-1.500 6" stroke="#aaa"/></g></svg>
<div class="a " style="left:902px;top:660px;width:445px;height:109.5px;border:1px solid #333;"></div>
<span class="t" style="left:907.5px;top:658.5px;font-size:10.5px;line-height:16px;letter-spacing:-0.41px;color:#222;">For internal use only:</span>
<span class="t" style="left:1000.0px;top:660.0px;font-size:7px;line-height:16px;letter-spacing:-0.26px;color:#222;font-weight:700;">Please put initial and date once deactivated</span>
<span class="t" style="left:907.5px;top:681.0px;font-size:8.5px;line-height:16px;transform:scaleX(0.8624);transform-origin:0 50%;color:#111;-webkit-text-stroke:.2px #111;">Canon</span>
<span class="t" style="left:1112.5px;top:681.0px;font-size:8.5px;line-height:16px;transform:scaleX(0.9326);transform-origin:0 50%;color:#111;-webkit-text-stroke:.2px #111;">Active Directory</span>
<svg class="a" style="left:982px;top:682px" width="13.5" height="13.5"><rect x=".5" y=".5" width="12.5" height="12.5" fill="#92e295" stroke="#a3dcdc"/><path d="M2.300 2.300l8.9 8.9M11.2 2.300l-8.9 8.9" stroke="#1f5a2a" stroke-width="1"/><rect x="2" y="2" width="9.5" height="9.5" fill="none" stroke="#3c8a4c" stroke-width=".8"/></svg>
<svg class="a" style="left:1175px;top:684.5px" width="11" height="13"><rect x=".5" y=".5" width="10" height="12" fill="#92e295" stroke="#a3dcdc"/><path d="M2.300 2.300l6.4 8.4M8.7 2.300l-6.4 8.4" stroke="#1f5a2a" stroke-width="1"/><rect x="2" y="2" width="7" height="9" fill="none" stroke="#3c8a4c" stroke-width=".8"/></svg>
<div class="a " style="left:1010px;top:693px;width:68px;height:1px;background:#444;"></div>
<div class="a " style="left:1200px;top:693px;width:72.5px;height:1px;background:#444;"></div>
<span class="t" style="left:907.5px;top:702.5px;font-size:8.5px;line-height:16px;transform:scaleX(0.9037);transform-origin:0 50%;color:#111;-webkit-text-stroke:.2px #111;">EMC Powerlink</span>
<span class="t" style="left:1112.5px;top:702.5px;font-size:8.5px;line-height:16px;transform:scaleX(0.9209);transform-origin:0 50%;color:#111;-webkit-text-stroke:.2px #111;">Goldmine</span>
<svg class="a" style="left:982px;top:705px" width="11" height="13.5"><rect x=".5" y=".5" width="10" height="12.5" fill="#92e295" stroke="#a3dcdc"/><path d="M2.300 2.300l6.4 8.9M8.7 2.300l-6.4 8.9" stroke="#1f5a2a" stroke-width="1"/><rect x="2" y="2" width="7" height="9.5" fill="none" stroke="#3c8a4c" stroke-width=".8"/></svg>
<svg class="a" style="left:1175px;top:707.5px" width="11" height="13"><rect x=".5" y=".5" width="10" height="12" fill="#92e295" stroke="#a3dcdc"/><path d="M2.300 2.300l6.4 8.4M8.7 2.300l-6.4 8.4" stroke="#1f5a2a" stroke-width="1"/><rect x="2" y="2" width="7" height="9" fill="none" stroke="#3c8a4c" stroke-width=".8"/></svg>
<div class="a " style="left:1010px;top:714.5px;width:68px;height:1px;background:#777;"></div>
<div class="a " style="left:1200px;top:714.5px;width:72.5px;height:1px;background:#777;"></div>
<span class="t" style="left:907.5px;top:724.0px;font-size:8.5px;line-height:16px;transform:scaleX(0.8467);transform-origin:0 50%;color:#111;-webkit-text-stroke:.2px #111;">Access Badge</span>
<span class="t" style="left:1112.5px;top:724.0px;font-size:8.5px;line-height:16px;transform:scaleX(0.8939);transform-origin:0 50%;color:#111;-webkit-text-stroke:.2px #111;">Email</span>
<svg class="a" style="left:982px;top:728.5px" width="11" height="13.5"><rect x=".5" y=".5" width="10" height="12.5" fill="#92e295" stroke="#a3dcdc"/><path d="M2.300 2.300l6.4 8.9M8.7 2.300l-6.4 8.9" stroke="#1f5a2a" stroke-width="1"/><rect x="2" y="2" width="7" height="9.5" fill="none" stroke="#3c8a4c" stroke-width=".8"/></svg>
<svg class="a" style="left:1175px;top:728.5px" width="11" height="13"><rect x=".5" y=".5" width="10" height="12" fill="#92e295" stroke="#a3dcdc"/><path d="M2.300 2.300l6.4 8.4M8.7 2.300l-6.4 8.4" stroke="#1f5a2a" stroke-width="1"/><rect x="2" y="2" width="7" height="9" fill="none" stroke="#3c8a4c" stroke-width=".8"/></svg>
<div class="a " style="left:1010px;top:735.7px;width:68px;height:1px;background:#777;"></div>
<div class="a " style="left:1200px;top:735.7px;width:72.5px;height:1px;background:#777;"></div>
<span class="t" style="left:907.5px;top:745.2px;font-size:8.5px;line-height:16px;transform:scaleX(0.8969);transform-origin:0 50%;color:#111;-webkit-text-stroke:.2px #111;">Alarm Password</span>
<span class="t" style="left:1112.5px;top:745.2px;font-size:8.5px;line-height:16px;transform:scaleX(0.8952);transform-origin:0 50%;color:#111;-webkit-text-stroke:.2px #111;">Phone</span>
<svg class="a" style="left:982px;top:748.5px" width="11" height="13.5"><rect x=".5" y=".5" width="10" height="12.5" fill="#92e295" stroke="#a3dcdc"/><path d="M2.300 2.300l6.4 8.9M8.7 2.300l-6.4 8.9" stroke="#1f5a2a" stroke-width="1"/><rect x="2" y="2" width="7" height="9.5" fill="none" stroke="#3c8a4c" stroke-width=".8"/></svg>
<svg class="a" style="left:1175px;top:749px" width="11" height="14"><rect x=".5" y=".5" width="10" height="13" fill="#92e295" stroke="#a3dcdc"/><path d="M2.300 2.300l6.4 9.4M8.7 2.300l-6.4 9.4" stroke="#1f5a2a" stroke-width="1"/><rect x="2" y="2" width="7" height="10" fill="none" stroke="#3c8a4c" stroke-width=".8"/></svg>
<div class="a " style="left:1010px;top:757px;width:68px;height:1px;background:#444;"></div>
<div class="a " style="left:1200px;top:757px;width:72.5px;height:1px;background:#444;"></div>
<svg class="a" style="left:841px;top:396px" width="577" height="387" viewBox="841 396 577 387" fill="none" stroke-linecap="round" stroke-linejoin="round" stroke-width=".9"><path d="M1013 689.500l.3-7.500c1.500-1 2.500 0 2.700 2l.2 5M1016 684c1.500-2.500 3.500-2 3.800 .5l.6 6.200M1025.200 678l-.2 12.500M1031.200 678.500l-5.500 7 5.800 4" stroke="#555"/><path d="M1014.500 702l.8 9.500M1015 702l4 6.500 1-5.500M1027.500 711l.5-10M1033 700.500l-5 7c2 3.500 4.500 6 7.500 6.500" stroke="#9a9a9a"/><path d="M1016.500 719l.5 10c-.5 2.500-3 3-4.500 .8M1023 723.500l.3 6.500M1026 723l3 7" stroke="#bdbdbd"/><path d="M1020.500 739.500c1.200 5 1.500 10 .8 15.500-1.200 2.500-3.800 2-4.800-.5M1027 746l.8 9 2-8.500 2.500 .5 .8 8.500" stroke="#5a5a5a"/><path d="M1034.500 750l.3 4" stroke="#bbb"/><path d="M1206.500 675.500c.8 5 1 10 .5 15.300-1.500 1.500-4 1.200-5.500-.5" stroke="#6a6a6a"/><path d="M1212.700 683l1 9 3-8 4.500 1.500 1.500 6" stroke="#c4c4c4"/><path d="M1206.500 700.800c.8 3.500 1 7 .5 10-1.500 2-4 1-5.300-1.500" stroke="#555"/><path d="M1212.500 703l1.500 7.500 2.500-6 4 3" stroke="#c8c8c8"/><path d="M1210 726.800c.6 3 .3 6-.7 8.400-1.500 .8-2.800 0-3.300-2" stroke="#555"/><path d="M1215.400 727.400l.6 6.600 3.300-6.600 3.300 0 2.800 7.200" stroke="#7a7a7a"/><path d="M1210 745.700c1 4 1.500 8 1.500 10.500-1.800 1.500-4.500 .5-6-2.200" stroke="#4a4a4a"/><path d="M1217 749.600l1.200 5.600 2.200-4.500 3.300-1.100 1.700 7.700" stroke="#6a6a6a"/></svg>
<div class="a " style="left:338px;top:438px;width:151px;height:24.5px;background:#eeee18;mix-blend-mode:multiply;"></div>
<div class="a " style="left:315px;top:469.5px;width:191px;height:24.5px;background:#eeee18;mix-blend-mode:multiply;"></div>
<div class="a " style="left:679px;top:687px;width:68px;height:25.5px;background:#eeee18;mix-blend-mode:multiply;"></div>
<svg class="a" style="left:0;top:0" width="1442" height="812" viewBox="0 0 1442 812"><defs><filter id="ds" x="-20%" y="-20%" width="150%" height="160%"><feGaussianBlur in="SourceAlpha" stdDeviation="1.6"/><feOffset dx="2.5" dy="3"/><feComponentTransfer><feFuncA type="linear" slope=".62"/></feComponentTransfer><feMerge><feMergeNode/><feMergeNode in="SourceGraphic"/></feMerge></filter></defs><g fill="#f7931e" filter="url(#ds)"><path d="M217 440.300H309.500V433L340.800 443.200L309.500 453V446.200H217z"/><circle cx="217" cy="443" r="19.300"/><path d="M617 479.400H524V472L492.400 482L524 492.200V484.700H617z"/><circle cx="617" cy="482" r="19.300"/><path d="M735 701L765 691.200V698H951V690.700L982.800 700.800L951 711.700V704.400H765V711.200z"/><circle cx="858" cy="700.700" r="19.200"/></g><g fill="#fff" font-family="Liberation Sans" font-weight="700" font-size="24.500" text-anchor="middle"><text x="217" y="451.200">3</text><text x="617" y="490.200">4</text><text x="858" y="709.400">5</text></g></svg>
</body></html>
